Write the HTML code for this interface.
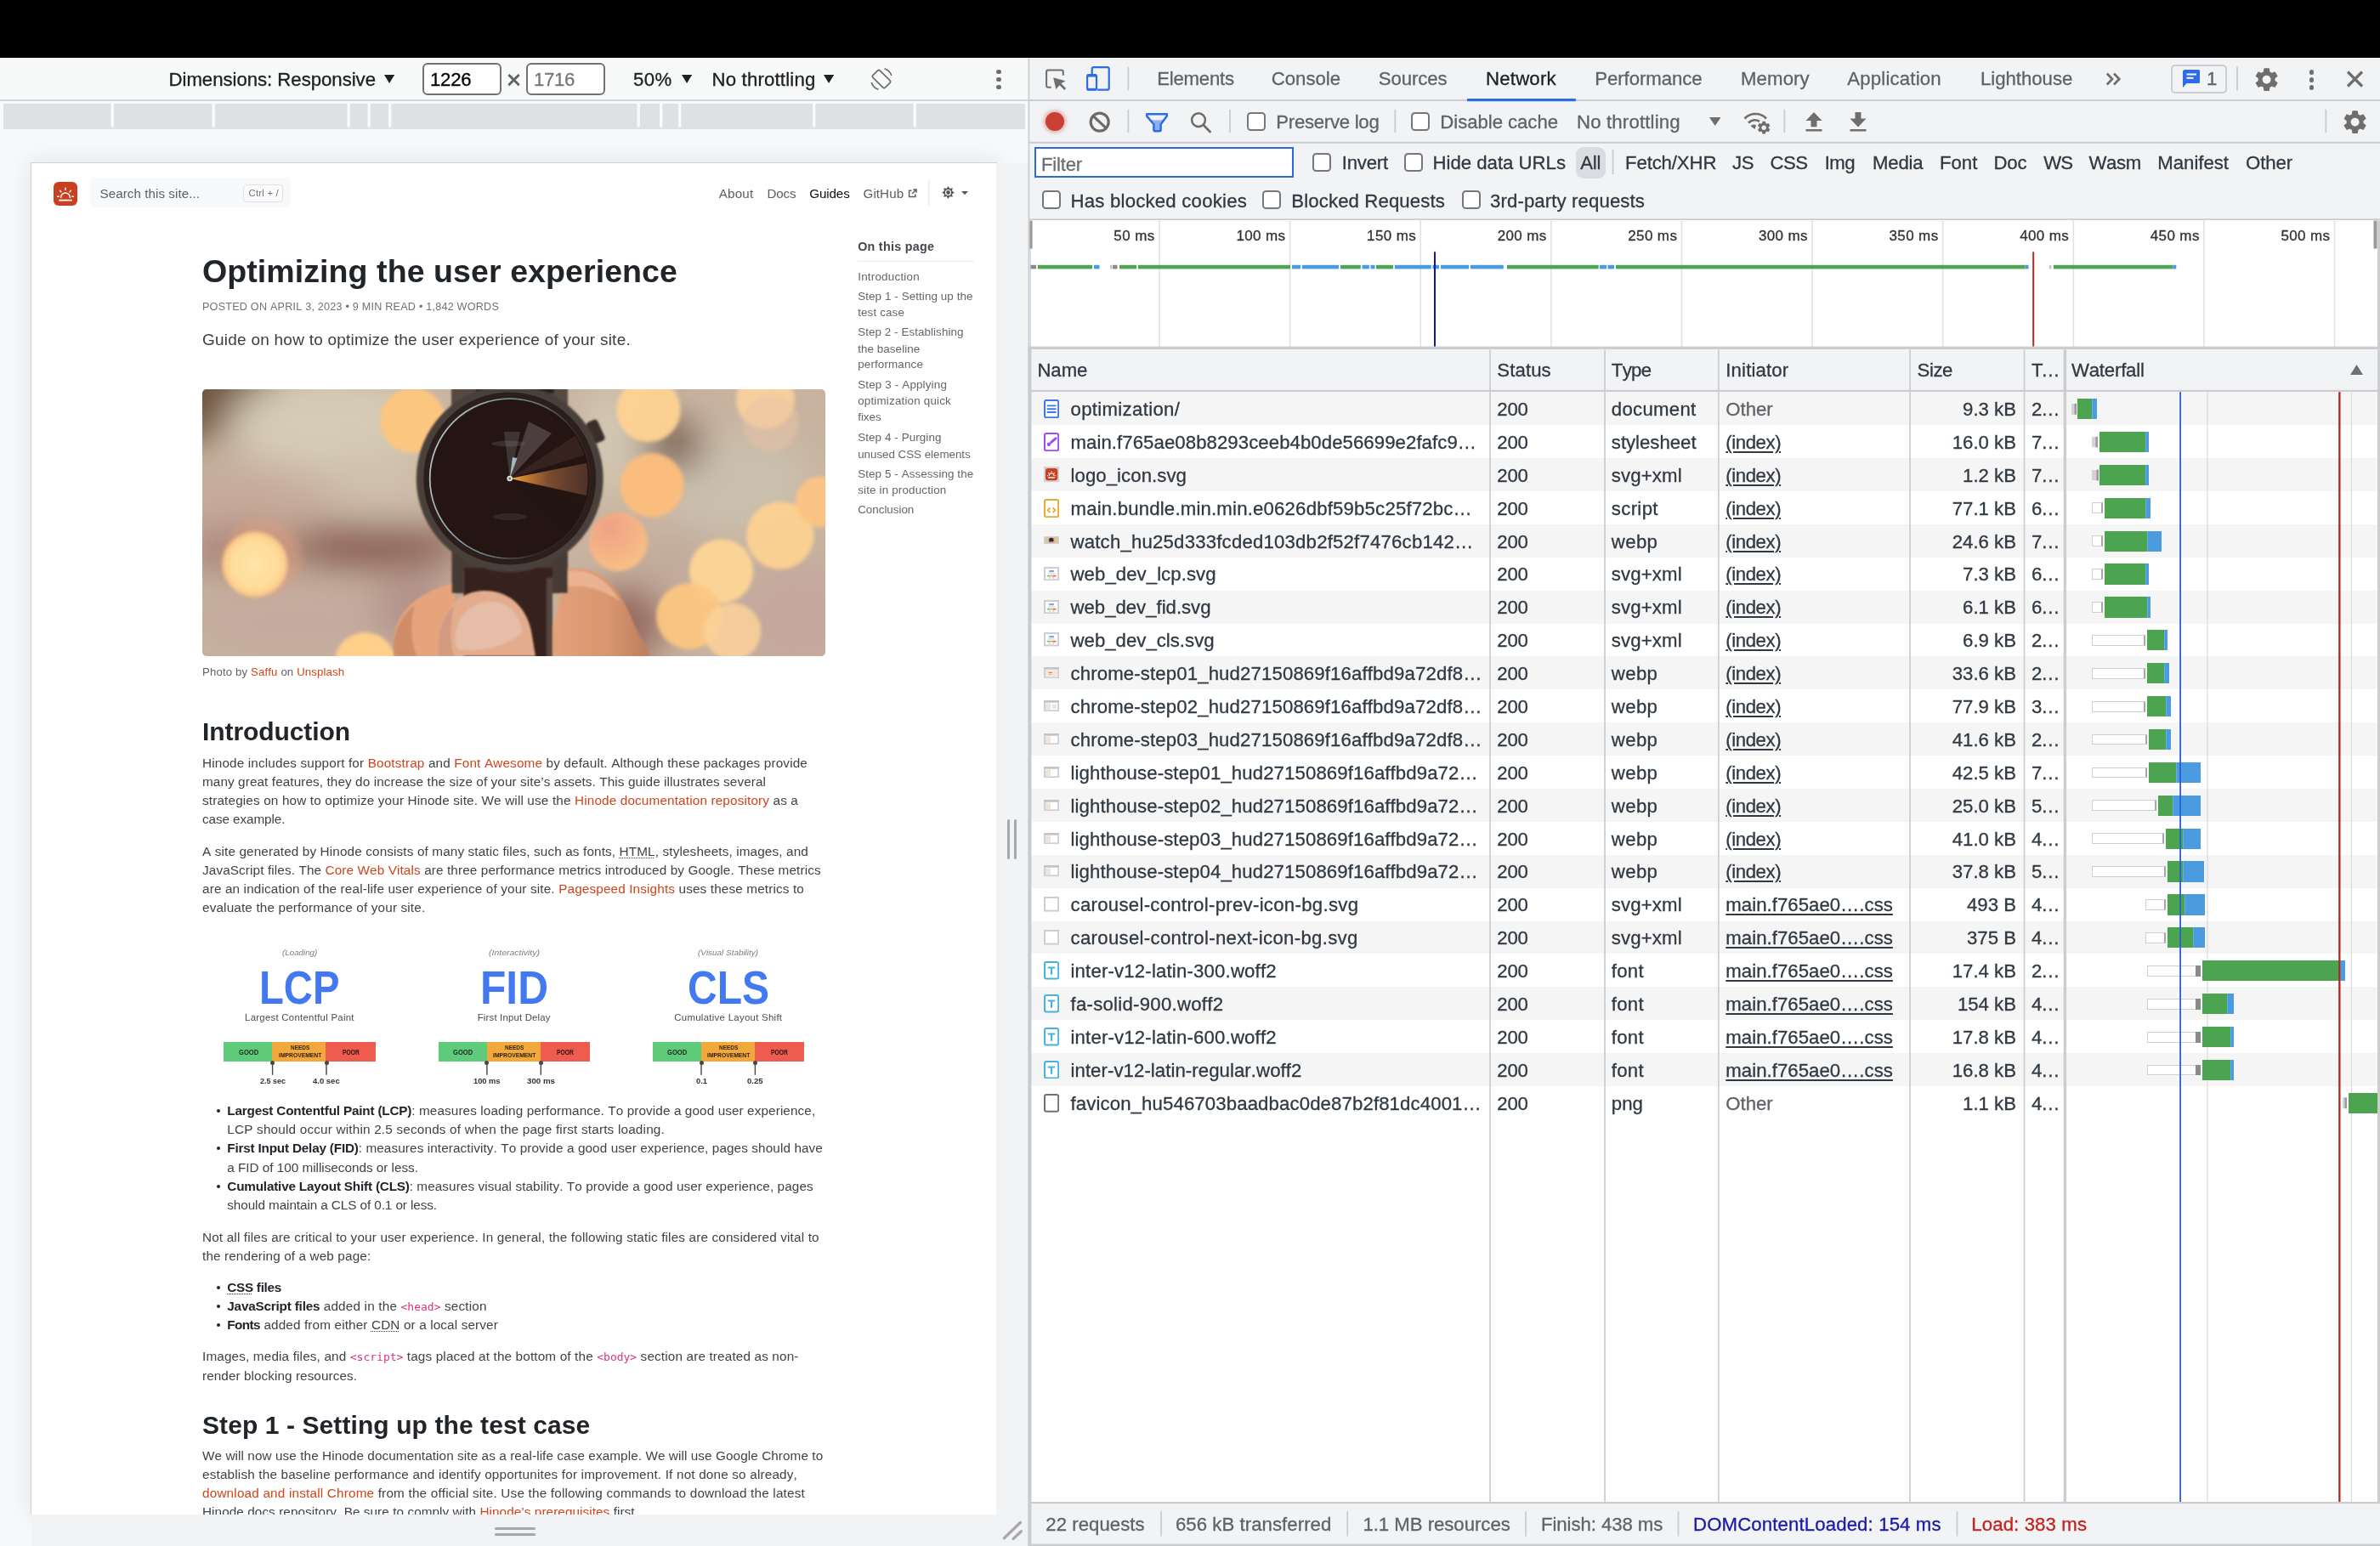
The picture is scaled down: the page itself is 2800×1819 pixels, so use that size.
<!DOCTYPE html>
<html lang="en"><head><meta charset="utf-8"><title>Optimizing the user experience - DevTools</title>
<style>
html,body{margin:0;padding:0}
body{width:2800px;height:1819px;position:relative;overflow:hidden;background:#f8f9fa;font-family:"Liberation Sans",sans-serif;color:#202124}
#root{position:absolute;left:0;top:0;width:2800px;height:1819px;will-change:transform}
.t{position:absolute;white-space:nowrap;line-height:1;font-kerning:none}
.r{position:absolute;box-sizing:border-box}
.c{position:absolute;overflow:hidden}
a,.l{color:#d0451b;text-decoration:none}
b{font-weight:700;color:#212529}
code{font-family:"DejaVu Sans Mono","Liberation Mono",monospace;color:#d63384;font-size:.85em;letter-spacing:0}
abbr{text-decoration:underline dotted;text-decoration-thickness:1px;text-underline-offset:2px}
u{text-decoration:underline;text-decoration-thickness:1.5px;text-underline-offset:3px}
</style></head>
<body>
<div id="root">
<div class="r" style="left:0.00px;top:0.00px;width:2800.00px;height:68.40px;background:#000;"></div>
<div class="r" style="left:0.00px;top:68.50px;width:1210.00px;height:50.00px;background:#f8f9f9;"></div>
<svg class="r" style="left:0px;top:117px" width="1210" height="2"><rect x="0.00" y="0.00" width="1210.00" height="2.00" fill="#d3d6da"/></svg>
<div class="t" style="left:198.50px;top:82.51px;font-size:22.20px;color:#202124;-webkit-text-stroke:.3px;letter-spacing:-0.031px">Dimensions: Responsive</div>
<svg class="r" style="left:451.50px;top:87.80px;" width="12.20" height="10.00" viewBox="0 0 12.2 10"><path d="M0 0H12.2 L6.1 10Z" fill="#202124"/></svg>
<div class="r" style="left:497.30px;top:74.00px;width:92.40px;height:37.70px;background:#fff;border:2.1px solid #727272;border-radius:6px"></div>
<div class="t" style="left:506.00px;top:82.51px;font-size:22.20px;color:#000;-webkit-text-stroke:.3px;letter-spacing:-0.215px">1226</div>
<div class="t" style="left:595.80px;top:79.20px;font-size:30.00px;color:#5f6368;-webkit-text-stroke:.3px;font-weight:400;-webkit-text-stroke:.7px">×</div>
<div class="r" style="left:619.30px;top:74.00px;width:92.40px;height:37.70px;background:#fff;border:2.1px solid #727272;border-radius:6px"></div>
<div class="t" style="left:628.00px;top:82.51px;font-size:22.20px;color:#777;-webkit-text-stroke:.3px;letter-spacing:-0.340px">1716</div>
<div class="t" style="left:745.00px;top:82.51px;font-size:22.20px;color:#202124;-webkit-text-stroke:.3px;letter-spacing:0.359px">50%</div>
<svg class="r" style="left:801.50px;top:87.80px;" width="12.20" height="10.00" viewBox="0 0 12.2 10"><path d="M0 0H12.2 L6.1 10Z" fill="#202124"/></svg>
<div class="t" style="left:837.50px;top:82.51px;font-size:22.20px;color:#202124;-webkit-text-stroke:.3px;letter-spacing:0.181px">No throttling</div>
<svg class="r" style="left:968.50px;top:87.80px;" width="12.20" height="10.00" viewBox="0 0 12.2 10"><path d="M0 0H12.2 L6.1 10Z" fill="#202124"/></svg>
<svg class="r" style="left:1022.00px;top:78.00px;" width="30.00" height="30.00" viewBox="0 0 30 30"><g fill="none" stroke="#6e6e6e" stroke-width="1.700"><rect x="9.200" y="4.800" width="11.600" height="20.400" rx="2" transform="rotate(-45 15 15)"/><path d="M3.200 19A12.800 12.800 0 0 0 11.500 27.300"/><path d="M26.800 11A12.800 12.800 0 0 0 18.500 2.700"/></g></svg>
<div class="r" style="left:1172.20px;top:81.70px;width:5.60px;height:5.60px;background:#6e6e6e;border-radius:50%"></div>
<div class="r" style="left:1172.20px;top:90.70px;width:5.60px;height:5.60px;background:#6e6e6e;border-radius:50%"></div>
<div class="r" style="left:1172.20px;top:99.70px;width:5.60px;height:5.60px;background:#6e6e6e;border-radius:50%"></div>
<div class="r" style="left:0.00px;top:119.00px;width:1210.00px;height:36.00px;background:#f8f9f9;"></div>
<div class="r" style="left:4.00px;top:122.00px;width:1202.00px;height:30.00px;background:#dfe0e4;"></div>
<svg class="r" style="left:130px;top:122px" width="4" height="28"><rect x="0.50" y="0.00" width="3.40" height="27.50" fill="#f8f9f9"/></svg>
<svg class="r" style="left:249px;top:122px" width="4" height="28"><rect x="0.50" y="0.00" width="3.40" height="27.50" fill="#f8f9f9"/></svg>
<svg class="r" style="left:408px;top:122px" width="4" height="28"><rect x="0.50" y="0.00" width="3.40" height="27.50" fill="#f8f9f9"/></svg>
<svg class="r" style="left:432px;top:122px" width="4" height="28"><rect x="0.50" y="0.00" width="3.40" height="27.50" fill="#f8f9f9"/></svg>
<svg class="r" style="left:457px;top:122px" width="4" height="28"><rect x="0.00" y="0.00" width="3.40" height="27.50" fill="#f8f9f9"/></svg>
<svg class="r" style="left:749px;top:122px" width="4" height="28"><rect x="0.50" y="0.00" width="3.40" height="27.50" fill="#f8f9f9"/></svg>
<svg class="r" style="left:776px;top:122px" width="4" height="28"><rect x="0.00" y="0.00" width="3.40" height="27.50" fill="#f8f9f9"/></svg>
<svg class="r" style="left:798px;top:122px" width="4" height="28"><rect x="0.00" y="0.00" width="3.40" height="27.50" fill="#f8f9f9"/></svg>
<svg class="r" style="left:956px;top:122px" width="4" height="28"><rect x="0.00" y="0.00" width="3.40" height="27.50" fill="#f8f9f9"/></svg>
<svg class="r" style="left:1074px;top:122px" width="4" height="28"><rect x="0.50" y="0.00" width="3.40" height="27.50" fill="#f8f9f9"/></svg>
<div class="c" style="left:0;top:155px;width:1210px;height:1664px"><div class="r" style="left:35.90px;top:36.40px;width:1137.00px;height:1591.00px;background:#fff;border-top:1.2px solid #cfd2d4;border-left:1.2px solid #cfd2d4;box-shadow:0 0 28px 4px rgba(10,20,15,.075)"></div>
</div>
<div class="r" style="left:1172.00px;top:192.00px;width:38.00px;height:1627.00px;background:#f1f3f4;"></div>
<div class="r" style="left:36.50px;top:1782.00px;width:1173.50px;height:37.00px;background:#f1f3f4;"></div>
<div class="r" style="left:1185.00px;top:964.00px;width:3.40px;height:47.00px;background:#a6a8ab;border-radius:2px"></div>
<div class="r" style="left:1192.60px;top:964.00px;width:3.40px;height:47.00px;background:#a6a8ab;border-radius:2px"></div>
<div class="r" style="left:581.50px;top:1796.50px;width:48.00px;height:3.40px;background:#a6a8ab;border-radius:2px"></div>
<div class="r" style="left:581.50px;top:1804.00px;width:48.00px;height:3.40px;background:#a6a8ab;border-radius:2px"></div>
<svg class="r" style="left:1179.00px;top:1788.00px;" width="26.00" height="26.00" viewBox="0 0 26 26"><g stroke="#a9a9ab" stroke-width="3.300" stroke-linecap="round"><path d="M2.400 21.800L21.500 3.300"/><path d="M13 22.600L22.400 13.700"/></g></svg>
<div class="r" style="left:63.00px;top:214.00px;width:28.00px;height:28.00px;background:#c8401f;border-radius:6px"></div>
<svg class="r" style="left:63.00px;top:214.00px;" width="28.00" height="28.00" viewBox="0 0 28 28"><g stroke="#fff" stroke-width="1.5" stroke-linecap="round" fill="none"><path d="M8.6 18.4a5.4 5.4 0 0 1 10.8 0"/><path d="M14 7.2v2.2M7.6 10.3l1.3 1.5M20.4 10.3l-1.3 1.5M4.6 17.2h1.6M21.8 17.2h1.6"/><path d="M7 21.6h14" stroke-width="1.9"/></g></svg>
<div class="r" style="left:106.30px;top:209.30px;width:235.50px;height:35.00px;background:#f8f9fa;border-radius:5px"></div>
<div class="t" style="left:117.50px;top:220.13px;font-size:15.20px;color:#5d6166;letter-spacing:0.053px">Search this site...</div>
<div class="r" style="left:286.30px;top:216.80px;width:47.00px;height:21.50px;background:#fbfbfc;border:1px solid #dee2e6;border-radius:4px"></div>
<div class="t" style="left:292.50px;top:221.95px;font-size:11.40px;color:#6c757d;letter-spacing:0.203px">Ctrl + /</div>
<div class="t" style="left:845.70px;top:219.93px;font-size:15.20px;color:#5b5e61;letter-spacing:0.199px">About</div>
<div class="t" style="left:902.50px;top:219.93px;font-size:15.20px;color:#5b5e61;letter-spacing:-0.152px">Docs</div>
<div class="t" style="left:952.30px;top:219.93px;font-size:15.20px;color:#111;letter-spacing:-0.138px">Guides</div>
<div class="t" style="left:1015.50px;top:219.93px;font-size:15.20px;color:#5b5e61;letter-spacing:0.070px">GitHub</div>
<svg class="r" style="left:1067.50px;top:221.50px;" width="11.00" height="11.00" viewBox="0 0 11 11"><g fill="none" stroke="#5b5e61" stroke-width="1.5"><path d="M4.5 2.2H1.6v7.2h7.2V6.5"/><path d="M6.3 1h3.7v3.7M9.8 1.2L5 6"/></g></svg>
<svg class="r" style="left:1092px;top:212px" width="2" height="30"><rect x="0.30" y="0.00" width="1.00" height="30.00" fill="#dcdfe2"/></svg>
<svg class="r" style="left:1107.50px;top:219.30px;" width="15.00" height="15.00" viewBox="0 0 15 15"><g fill="#555"><path d="M7.5 0L9.6 3.4H5.4Z" transform="rotate(0 7.5 7.5)"/><path d="M7.5 0L9.6 3.4H5.4Z" transform="rotate(45 7.5 7.5)"/><path d="M7.5 0L9.6 3.4H5.4Z" transform="rotate(90 7.5 7.5)"/><path d="M7.5 0L9.6 3.4H5.4Z" transform="rotate(135 7.5 7.5)"/><path d="M7.5 0L9.6 3.4H5.4Z" transform="rotate(180 7.5 7.5)"/><path d="M7.5 0L9.6 3.4H5.4Z" transform="rotate(225 7.5 7.5)"/><path d="M7.5 0L9.6 3.4H5.4Z" transform="rotate(270 7.5 7.5)"/><path d="M7.5 0L9.6 3.4H5.4Z" transform="rotate(315 7.5 7.5)"/><circle cx="7.5" cy="7.5" r="5"/></g><circle cx="7.5" cy="7.5" r="3" fill="none" stroke="#fff" stroke-width="1.2"/></svg>
<svg class="r" style="left:1130.80px;top:224.50px;" width="8.00" height="4.20" viewBox="0 0 8 4.2"><path d="M0 0H8 L4 4.2Z" fill="#555"/></svg>
<div class="t" style="left:1009.20px;top:283.10px;font-size:14.30px;color:#42474c;font-weight:700;letter-spacing:0.284px">On this page</div>
<svg class="r" style="left:1008px;top:306px" width="138" height="2"><rect x="0.50" y="0.80" width="137.50" height="1.00" fill="#e6e9ec"/></svg>
<div class="t" style="left:1009.20px;top:318.66px;font-size:13.40px;color:#62676d;letter-spacing:0.226px">Introduction</div>
<div class="t" style="left:1009.20px;top:341.66px;font-size:13.40px;color:#62676d;letter-spacing:0.093px">Step 1 - Setting up the</div>
<div class="t" style="left:1009.20px;top:360.56px;font-size:13.40px;color:#62676d;letter-spacing:0.134px">test case</div>
<div class="t" style="left:1009.20px;top:384.26px;font-size:13.40px;color:#62676d;letter-spacing:0.070px">Step 2 - Establishing</div>
<div class="t" style="left:1009.20px;top:403.56px;font-size:13.40px;color:#62676d;letter-spacing:0.073px">the baseline</div>
<div class="t" style="left:1009.20px;top:422.06px;font-size:13.40px;color:#62676d;letter-spacing:0.147px">performance</div>
<div class="t" style="left:1009.20px;top:446.06px;font-size:13.40px;color:#62676d;letter-spacing:0.166px">Step 3 - Applying</div>
<div class="t" style="left:1009.20px;top:465.36px;font-size:13.40px;color:#62676d;letter-spacing:0.187px">optimization quick</div>
<div class="t" style="left:1009.20px;top:484.36px;font-size:13.40px;color:#62676d;letter-spacing:-0.029px">fixes</div>
<div class="t" style="left:1009.20px;top:508.36px;font-size:13.40px;color:#62676d;letter-spacing:0.095px">Step 4 - Purging</div>
<div class="t" style="left:1009.20px;top:527.56px;font-size:13.40px;color:#62676d;letter-spacing:-0.039px">unused CSS elements</div>
<div class="t" style="left:1009.20px;top:550.66px;font-size:13.40px;color:#62676d;letter-spacing:0.096px">Step 5 - Assessing the</div>
<div class="t" style="left:1009.20px;top:569.86px;font-size:13.40px;color:#62676d;letter-spacing:0.165px">site in production</div>
<div class="t" style="left:1009.20px;top:593.16px;font-size:13.40px;color:#62676d;letter-spacing:-0.015px">Conclusion</div>
<div class="t" style="left:238.00px;top:300.87px;font-size:37.60px;color:#212529;font-weight:700;letter-spacing:0.048px">Optimizing the user experience</div>
<div class="t" style="left:238.00px;top:354.63px;font-size:12.60px;color:#6e7379;letter-spacing:0.225px">POSTED ON APRIL 3, 2023 • 9 MIN READ • 1,842 WORDS</div>
<div class="t" style="left:238.00px;top:389.92px;font-size:19.00px;color:#3a3e42;letter-spacing:0.240px">Guide on how to optimize the user experience of your site.</div>
<svg class="r" style="left:238.00px;top:457.70px;" width="733.00" height="314.00" viewBox="0 0 733 314"><defs><filter id="hb" x="-20%" y="-20%" width="140%" height="140%"><feGaussianBlur stdDeviation="2"/></filter><filter id="hb2" x="-50%" y="-50%" width="200%" height="200%"><feGaussianBlur stdDeviation="22"/></filter><filter id="hb3" x="-10%" y="-10%" width="120%" height="120%"><feGaussianBlur stdDeviation="1.1"/></filter><filter id="hb4" x="-30%" y="-30%" width="160%" height="160%"><feGaussianBlur stdDeviation="5"/></filter><clipPath id="hc"><rect width="733" height="314" rx="5"/></clipPath><clipPath id="fc"><circle cx="361.7" cy="105" r="92"/></clipPath><linearGradient id="og" gradientUnits="userSpaceOnUse" x1="361.7" x2="453.7"><stop offset="0" stop-color="#f6a83c"/><stop offset=".22" stop-color="#c47a2e"/><stop offset=".5" stop-color="#7a4b30"/><stop offset="1" stop-color="#4f3129"/></linearGradient><linearGradient id="sk" x1="0" x2="1"><stop offset="0" stop-color="#e4a37c"/><stop offset=".6" stop-color="#d8966f"/><stop offset="1" stop-color="#bb7d5e"/></linearGradient><radialGradient id="pk" cx=".35" cy=".25" r=".8"><stop offset="0" stop-color="#f1a085"/><stop offset="1" stop-color="#fbc184"/></radialGradient><radialGradient id="b2" cx=".5" cy=".5" r=".5"><stop offset="0" stop-color="#ffe6aa"/><stop offset=".75" stop-color="#ffdb98"/><stop offset="1" stop-color="#fbc585"/></radialGradient><linearGradient id="rg" x1="0" x2="1" y1=".3" y2=".6"><stop offset="0" stop-color="#cfe2e6"/><stop offset=".45" stop-color="#7f9ea8"/><stop offset=".8" stop-color="#3b2c2a"/><stop offset="1" stop-color="#33231f"/></linearGradient></defs><g clip-path="url(#hc)"><rect width="733" height="314" fill="#c7b39f"/><g filter="url(#hb2)"><ellipse cx="-10" cy="-10" rx="95" ry="70" fill="#6f523e"/><ellipse cx="150" cy="40" rx="120" ry="55" fill="#d6ccb6"/><ellipse cx="210" cy="110" rx="60" ry="40" fill="#cfc0ab"/><ellipse cx="50" cy="135" rx="90" ry="35" fill="#c6a999"/><ellipse cx="200" cy="186" rx="110" ry="26" fill="#875a4f"/><ellipse cx="40" cy="190" rx="70" ry="24" fill="#a58073"/><ellipse cx="110" cy="275" rx="130" ry="45" fill="#c5ab9e"/><ellipse cx="250" cy="260" rx="50" ry="40" fill="#b3928a"/><ellipse cx="480" cy="60" rx="35" ry="70" fill="#d2c8b3"/><ellipse cx="620" cy="110" rx="100" ry="60" fill="#cbc0ae"/><ellipse cx="556" cy="66" rx="34" ry="28" fill="#6d4d3d"/><ellipse cx="700" cy="270" rx="80" ry="70" fill="#c4a89c"/><ellipse cx="500" cy="275" rx="45" ry="45" fill="#94685e"/><ellipse cx="560" cy="200" rx="50" ry="40" fill="#c3ab9c"/></g><circle cx="70" cy="198" r="46" fill="#e29f80" opacity=".45" filter="url(#hb4)"/><g filter="url(#hb)"><circle cx="247.5" cy="36.7" r="38.5" fill="#fcc680" opacity="0.98"/><circle cx="62" cy="206" r="38.5" fill="url(#b2)" opacity="1"/><circle cx="191.5" cy="322" r="36" fill="#ffd08a" opacity="0.98"/><circle cx="525" cy="24.4" r="37.7" fill="#fdd292" opacity="0.97"/><circle cx="662.5" cy="12" r="34.6" fill="#fbd29c" opacity="0.9"/><circle cx="668.6" cy="40" r="33.6" fill="#e9c4a8" opacity="0.5"/><circle cx="529" cy="113" r="37.7" fill="#fbbd7c" opacity="0.98"/><circle cx="679.8" cy="172" r="39.7" fill="#fcd092" opacity="0.96"/><circle cx="727.7" cy="132.4" r="30" fill="#fcc483" opacity="0.96"/><circle cx="610.5" cy="214" r="37.7" fill="#fdd596" opacity="0.95"/><circle cx="572.8" cy="267" r="38.7" fill="#fcc682" opacity="0.95"/><circle cx="623.8" cy="285" r="33.6" fill="#fcd29a" opacity="0.85"/><circle cx="489.3" cy="179.3" r="34.6" fill="url(#pk)" opacity=".95"/></g><g filter="url(#hb3)"><path d="M226 314C218 272 246 240 296 228L302 314Z" fill="#e6a47d"/><path d="M226 314C222 290 232 268 250 254C244 276 246 296 252 314Z" fill="#d08c69"/><path d="M428 212C462 206 486 226 502 262C512 286 520 300 527 314H405Z" fill="url(#sk)"/><path d="M430 214C458 210 478 226 492 250C470 234 448 230 430 232Z" fill="#ecb898" opacity=".8"/><rect x="293" y="-4" width="137" height="40" fill="#574a42"/><rect x="322" y="-4" width="92" height="9" fill="#2a201d"/><rect x="293.500" y="188" width="136.500" height="52" rx="2" fill="#46393500"/><path d="M293.500 185H430V240H412V214H307.600V240H293.500Z" fill="#473a35"/><rect x="307.600" y="210" width="104.400" height="110" fill="#35231f"/><rect x="405" y="222" width="7" height="100" fill="#54443f"/><rect x="456" y="36" width="14" height="27" rx="4" fill="#3a2d29" transform="rotate(-24 463 50)"/><circle cx="361.7" cy="105" r="110" fill="#4a3f3a"/></g><circle cx="361.7" cy="105" r="101.500" fill="#2b1e1b"/><circle cx="361.7" cy="105" r="94" fill="none" stroke="url(#rg)" stroke-width="1.700" opacity=".85"/><circle cx="362.2" cy="105.3" r="93" fill="#251512"/><g clip-path="url(#fc)"><path d="M361.7 105L456 86L456 126Z" fill="url(#og)"/><path d="M361.7 105L460 74L452 46Z" fill="#46302b" opacity=".55"/><path d="M361.7 105L384 38L411 52Z" fill="#74676a" opacity=".5"/><path d="M361.7 105L355 50L374 50Z" fill="#8f949c" opacity=".26"/><path d="M361.7 105L365 80L370.500 81Z" fill="#b9d4dc" opacity=".85"/><path d="M268 88L361.7 105L268 146Z" fill="#38252200" opacity=".5"/><path d="M361.7 105L452 140L438 178Z" fill="#211412" opacity=".7"/><ellipse cx="360" cy="64" rx="20" ry="3.500" fill="#8a8a90" opacity=".22"/><ellipse cx="362" cy="150" rx="20" ry="4" fill="#55555c" opacity=".3"/></g><circle cx="361.7" cy="105" r="3.300" fill="#e9e3cc"/><circle cx="361.7" cy="105" r="1.500" fill="#5a7f96"/><g filter="url(#hb3)"><path d="M279 314C272 268 298 237 332 237C364 237 384 260 388 290L392 314Z" fill="#e3ad8d"/><path d="M279 314C275 290 282 268 296 254C290 280 292 300 296 314Z" fill="#d29a80"/><path d="M298 302C294 270 316 250 340 250C360 250 374 266 376 286C362 300 330 310 302 306Z" fill="#e7c4b3" opacity=".7"/></g></g></svg>
<div class="t" style="left:238.00px;top:784.13px;font-size:13.20px;color:#5f646a;letter-spacing:0.146px">Photo by <span class="l">Saffu</span> on <span class="l">Unsplash</span></div>
<div class="t" style="left:238.00px;top:846.31px;font-size:30.00px;color:#212529;font-weight:700;letter-spacing:-0.081px">Introduction</div>
<div class="t" style="left:238.00px;top:889.75px;font-size:15.30px;color:#3f4347;letter-spacing:0.150px">Hinode includes support for <span class="l">Bootstrap</span> and <span class="l">Font Awesome</span> by default. Although these packages provide</div>
<div class="t" style="left:238.00px;top:912.05px;font-size:15.30px;color:#3f4347;letter-spacing:0.092px">many great features, they do increase the size of your site’s assets. This guide illustrates several</div>
<div class="t" style="left:238.00px;top:934.35px;font-size:15.30px;color:#3f4347;letter-spacing:0.148px">strategies on how to optimize your Hinode site. We will use the <span class="l">Hinode documentation repository</span> as a</div>
<div class="t" style="left:238.00px;top:956.35px;font-size:15.30px;color:#3f4347;letter-spacing:-0.103px">case example.</div>
<div class="t" style="left:238.00px;top:993.75px;font-size:15.30px;color:#3f4347;letter-spacing:0.128px">A site generated by Hinode consists of many static files, such as fonts, <abbr>HTML</abbr>, stylesheets, images, and</div>
<div class="t" style="left:238.00px;top:1016.05px;font-size:15.30px;color:#3f4347;letter-spacing:0.115px">JavaScript files. The <span class="l">Core Web Vitals</span> are three performance metrics introduced by Google. These metrics</div>
<div class="t" style="left:238.00px;top:1038.25px;font-size:15.30px;color:#3f4347;letter-spacing:0.143px">are an indication of the real-life user experience of your site. <span class="l">Pagespeed Insights</span> uses these metrics to</div>
<div class="t" style="left:238.00px;top:1060.45px;font-size:15.30px;color:#3f4347;letter-spacing:0.145px">evaluate the performance of your site.</div>
<div class="t" style="left:331.75px;top:1117.56px;font-size:8.20px;color:#7a7d82;font-style:italic;transform:scaleX(1.1939);transform-origin:0 0">(Loading)</div>
<div class="t" style="left:305.15px;top:1135.32px;font-size:55.50px;color:#4279f0;font-weight:700;transform:scaleX(0.8514);transform-origin:0 0">LCP</div>
<div class="t" style="left:288.05px;top:1191.85px;font-size:11.40px;color:#4a4c50;letter-spacing:0.270px">Largest Contentful Paint</div>
<div class="r" style="left:263.20px;top:1226.20px;width:57.30px;height:22.80px;background:#5ecb7a;"></div>
<div class="r" style="left:320.20px;top:1226.20px;width:63.40px;height:22.80px;background:#f2a83b;"></div>
<div class="r" style="left:383.30px;top:1226.20px;width:58.30px;height:22.80px;background:#ee5c50;"></div>
<div class="t" style="left:280.90px;top:1234.07px;font-size:8.30px;color:#1c2b1e;font-weight:700;transform:scaleX(0.9109);transform-origin:0 0">GOOD</div>
<div class="t" style="left:341.70px;top:1229.21px;font-size:7.90px;color:#2b1f0c;font-weight:700;transform:scaleX(0.8202);transform-origin:0 0">NEEDS</div>
<div class="t" style="left:327.50px;top:1238.31px;font-size:7.90px;color:#2b1f0c;font-weight:700;transform:scaleX(0.8579);transform-origin:0 0">IMPROVEMENT</div>
<div class="t" style="left:402.80px;top:1234.07px;font-size:8.30px;color:#2b1010;font-weight:700;transform:scaleX(0.8102);transform-origin:0 0">POOR</div>
<div class="r" style="left:318.10px;top:1248.10px;width:5.00px;height:5.00px;background:#474747;border-radius:50%"></div>
<svg class="r" style="left:319px;top:1250px" width="3" height="15"><rect x="0.90" y="0.00" width="1.40" height="14.80" fill="#474747"/></svg>
<div class="t" style="left:305.60px;top:1268.35px;font-size:8.80px;color:#333;font-weight:700;transform:scaleX(1.0218);transform-origin:0 0">2.5 sec</div>
<div class="r" style="left:381.50px;top:1248.10px;width:5.00px;height:5.00px;background:#474747;border-radius:50%"></div>
<svg class="r" style="left:383px;top:1250px" width="2" height="15"><rect x="0.30" y="0.00" width="1.40" height="14.80" fill="#474747"/></svg>
<div class="t" style="left:368.15px;top:1268.35px;font-size:8.80px;color:#333;font-weight:700;transform:scaleX(1.0797);transform-origin:0 0">4.0 sec</div>
<div class="t" style="left:574.70px;top:1117.56px;font-size:8.20px;color:#7a7d82;font-style:italic;transform:scaleX(1.2804);transform-origin:0 0">(Interactivity)</div>
<div class="t" style="left:564.70px;top:1135.32px;font-size:55.50px;color:#4279f0;font-weight:700;transform:scaleX(0.8948);transform-origin:0 0">FID</div>
<div class="t" style="left:561.70px;top:1191.85px;font-size:11.40px;color:#4a4c50;letter-spacing:0.180px">First Input Delay</div>
<div class="r" style="left:515.50px;top:1226.20px;width:57.30px;height:22.80px;background:#5ecb7a;"></div>
<div class="r" style="left:572.50px;top:1226.20px;width:63.40px;height:22.80px;background:#f2a83b;"></div>
<div class="r" style="left:635.60px;top:1226.20px;width:58.30px;height:22.80px;background:#ee5c50;"></div>
<div class="t" style="left:533.20px;top:1234.07px;font-size:8.30px;color:#1c2b1e;font-weight:700;transform:scaleX(0.9109);transform-origin:0 0">GOOD</div>
<div class="t" style="left:594.00px;top:1229.21px;font-size:7.90px;color:#2b1f0c;font-weight:700;transform:scaleX(0.8202);transform-origin:0 0">NEEDS</div>
<div class="t" style="left:579.80px;top:1238.31px;font-size:7.90px;color:#2b1f0c;font-weight:700;transform:scaleX(0.8579);transform-origin:0 0">IMPROVEMENT</div>
<div class="t" style="left:655.10px;top:1234.07px;font-size:8.30px;color:#2b1010;font-weight:700;transform:scaleX(0.8102);transform-origin:0 0">POOR</div>
<div class="r" style="left:570.40px;top:1248.10px;width:5.00px;height:5.00px;background:#474747;border-radius:50%"></div>
<svg class="r" style="left:572px;top:1250px" width="2" height="15"><rect x="0.20" y="0.00" width="1.40" height="14.80" fill="#474747"/></svg>
<div class="t" style="left:557.15px;top:1268.35px;font-size:8.80px;color:#333;font-weight:700;transform:scaleX(1.0555);transform-origin:0 0">100 ms</div>
<div class="r" style="left:633.80px;top:1248.10px;width:5.00px;height:5.00px;background:#474747;border-radius:50%"></div>
<svg class="r" style="left:635px;top:1250px" width="2" height="15"><rect x="0.60" y="0.00" width="1.40" height="14.80" fill="#474747"/></svg>
<div class="t" style="left:619.80px;top:1268.35px;font-size:8.80px;color:#333;font-weight:700;transform:scaleX(1.1058);transform-origin:0 0">300 ms</div>
<div class="t" style="left:821.30px;top:1117.56px;font-size:8.20px;color:#7a7d82;font-style:italic;transform:scaleX(1.2095);transform-origin:0 0">(Visual Stability)</div>
<div class="t" style="left:808.80px;top:1135.32px;font-size:55.50px;color:#4279f0;font-weight:700;transform:scaleX(0.8649);transform-origin:0 0">CLS</div>
<div class="t" style="left:793.30px;top:1191.85px;font-size:11.40px;color:#4a4c50;letter-spacing:0.291px">Cumulative Layout Shift</div>
<div class="r" style="left:767.60px;top:1226.20px;width:57.30px;height:22.80px;background:#5ecb7a;"></div>
<div class="r" style="left:824.60px;top:1226.20px;width:63.40px;height:22.80px;background:#f2a83b;"></div>
<div class="r" style="left:887.70px;top:1226.20px;width:58.30px;height:22.80px;background:#ee5c50;"></div>
<div class="t" style="left:785.30px;top:1234.07px;font-size:8.30px;color:#1c2b1e;font-weight:700;transform:scaleX(0.9109);transform-origin:0 0">GOOD</div>
<div class="t" style="left:846.10px;top:1229.21px;font-size:7.90px;color:#2b1f0c;font-weight:700;transform:scaleX(0.8202);transform-origin:0 0">NEEDS</div>
<div class="t" style="left:831.90px;top:1238.31px;font-size:7.90px;color:#2b1f0c;font-weight:700;transform:scaleX(0.8579);transform-origin:0 0">IMPROVEMENT</div>
<div class="t" style="left:907.20px;top:1234.07px;font-size:8.30px;color:#2b1010;font-weight:700;transform:scaleX(0.8102);transform-origin:0 0">POOR</div>
<div class="r" style="left:822.50px;top:1248.10px;width:5.00px;height:5.00px;background:#474747;border-radius:50%"></div>
<svg class="r" style="left:824px;top:1250px" width="2" height="15"><rect x="0.30" y="0.00" width="1.40" height="14.80" fill="#474747"/></svg>
<div class="t" style="left:818.50px;top:1268.35px;font-size:8.80px;color:#333;font-weight:700;transform:scaleX(1.0626);transform-origin:0 0">0.1</div>
<div class="r" style="left:885.90px;top:1248.10px;width:5.00px;height:5.00px;background:#474747;border-radius:50%"></div>
<svg class="r" style="left:887px;top:1250px" width="3" height="15"><rect x="0.70" y="0.00" width="1.40" height="14.80" fill="#474747"/></svg>
<div class="t" style="left:879.15px;top:1268.35px;font-size:8.80px;color:#333;font-weight:700;transform:scaleX(1.0803);transform-origin:0 0">0.25</div>
<div class="r" style="left:255.20px;top:1304.50px;width:4.20px;height:4.20px;background:#212529;border-radius:50%"></div>
<div class="r" style="left:255.20px;top:1349.00px;width:4.20px;height:4.20px;background:#212529;border-radius:50%"></div>
<div class="r" style="left:255.20px;top:1393.50px;width:4.20px;height:4.20px;background:#212529;border-radius:50%"></div>
<div class="r" style="left:255.20px;top:1512.80px;width:4.20px;height:4.20px;background:#212529;border-radius:50%"></div>
<div class="r" style="left:255.20px;top:1534.80px;width:4.20px;height:4.20px;background:#212529;border-radius:50%"></div>
<div class="r" style="left:255.20px;top:1556.80px;width:4.20px;height:4.20px;background:#212529;border-radius:50%"></div>
<div class="t" style="left:267.30px;top:1298.75px;font-size:15.30px;color:#3f4347;letter-spacing:-0.189px"><b>Largest Contentful Paint (LCP)</b></div>
<div class="t" style="left:484.30px;top:1298.75px;font-size:15.30px;color:#3f4347;letter-spacing:0.098px">: measures loading performance. To provide a good user experience,</div>
<div class="t" style="left:267.30px;top:1321.05px;font-size:15.30px;color:#3f4347;letter-spacing:0.187px">LCP should occur within 2.5 seconds of when the page first starts loading.</div>
<div class="t" style="left:267.30px;top:1343.25px;font-size:15.30px;color:#3f4347;letter-spacing:-0.197px"><b>First Input Delay (FID)</b></div>
<div class="t" style="left:421.70px;top:1343.25px;font-size:15.30px;color:#3f4347;letter-spacing:0.103px">: measures interactivity. To provide a good user experience, pages should have</div>
<div class="t" style="left:267.30px;top:1365.55px;font-size:15.30px;color:#3f4347;letter-spacing:-0.018px">a FID of 100 milliseconds or less.</div>
<div class="t" style="left:267.30px;top:1387.75px;font-size:15.30px;color:#3f4347;letter-spacing:-0.197px"><b>Cumulative Layout Shift (CLS)</b></div>
<div class="t" style="left:481.70px;top:1387.75px;font-size:15.30px;color:#3f4347;letter-spacing:0.082px">: measures visual stability. To provide a good user experience, pages</div>
<div class="t" style="left:267.30px;top:1410.05px;font-size:15.30px;color:#3f4347;letter-spacing:-0.089px">should maintain a CLS of 0.1 or less.</div>
<div class="t" style="left:238.00px;top:1447.75px;font-size:15.30px;color:#3f4347;letter-spacing:0.153px">Not all files are critical to your user experience. In general, the following static files are considered vital to</div>
<div class="t" style="left:238.00px;top:1470.05px;font-size:15.30px;color:#3f4347;letter-spacing:0.126px">the rendering of a web page:</div>
<div class="t" style="left:267.30px;top:1507.05px;font-size:15.30px;color:#3f4347;letter-spacing:-0.290px"><b><abbr>CSS</abbr> files</b></div>
<div class="t" style="left:267.30px;top:1529.05px;font-size:15.30px;color:#3f4347;letter-spacing:-0.203px"><b>JavaScript files</b></div>
<div class="t" style="left:376.30px;top:1529.05px;font-size:15.30px;color:#3f4347;letter-spacing:0.178px">&nbsp;added in the <code>&lt;head&gt;</code> section</div>
<div class="t" style="left:267.30px;top:1551.05px;font-size:15.30px;color:#3f4347;letter-spacing:-0.588px"><b>Fonts</b></div>
<div class="t" style="left:306.00px;top:1551.05px;font-size:15.30px;color:#3f4347;letter-spacing:0.134px">&nbsp;added from either <abbr>CDN</abbr> or a local server</div>
<div class="t" style="left:238.00px;top:1588.35px;font-size:15.30px;color:#3f4347;letter-spacing:0.148px">Images, media files, and <code>&lt;script&gt;</code> tags placed at the bottom of the <code>&lt;body&gt;</code> section are treated as non-</div>
<div class="t" style="left:238.00px;top:1610.75px;font-size:15.30px;color:#3f4347;letter-spacing:0.067px">render blocking resources.</div>
<div class="t" style="left:238.00px;top:1661.90px;font-size:30.00px;color:#212529;font-weight:700;letter-spacing:0.087px">Step 1 - Setting up the test case</div>
<div class="t" style="left:238.00px;top:1704.75px;font-size:15.30px;color:#3f4347;letter-spacing:0.082px">We will now use the Hinode documentation site as a real-life case example. We will use Google Chrome to</div>
<div class="t" style="left:238.00px;top:1727.05px;font-size:15.30px;color:#3f4347;letter-spacing:0.170px">establish the baseline performance and identify opportunites for improvement. If not done so already,</div>
<div class="t" style="left:238.00px;top:1749.35px;font-size:15.30px;color:#3f4347;letter-spacing:0.184px"><span class="l">download and install Chrome</span> from the official site. Use the following commands to download the latest</div>
<div class="c" style="left:230px;top:1768px;width:760px;height:14px"><div class="t" style="left:8.00px;top:3.05px;font-size:15.30px;color:#3f4347;letter-spacing:0.071px">Hinode docs repository. Be sure to comply with <span class="l">Hinode’s prerequisites</span> first.</div>
</div>
<div class="r" style="left:1210.00px;top:68.50px;width:1590.00px;height:190.00px;background:#f1f3f4;"></div>
<svg class="r" style="left:1209px;top:68px" width="3" height="1752"><rect x="0.50" y="0.50" width="1.80" height="1751.00" fill="#cbcdd1"/></svg>
<svg class="r" style="left:1211px;top:117px" width="1589" height="2"><rect x="0.00" y="0.00" width="1589.00" height="2.00" fill="#cbcdd1"/></svg>
<svg class="r" style="left:1226.00px;top:78.00px;" width="32.00" height="32.00" viewBox="1226 78 32 32"><path d="M1250.8 88.7V84.600a2 2 0 0 0-2-2H1233.100a2 2 0 0 0-2 2V100.800a2 2 0 0 0 2 2H1236.700" fill="none" stroke="#6e6e6e" stroke-width="2"/><path d="M1239.200 91.200L1253.500 95.200L1248.400 98.300L1254.200 104.100L1252.300 106L1246.500 100.200L1242.300 105.100Z" fill="#6e6e6e"/></svg>
<svg class="r" style="left:1276.00px;top:76.00px;" width="32.00" height="32.00" viewBox="1276 76 32 32"><g fill="none" stroke="#2e6be6" stroke-width="2.200"><path d="M1284.700 87V81.200a2 2 0 0 1 2-2h16a2 2 0 0 1 2 2v22.500a2 2 0 0 1-2 2H1291.100"/><rect x="1279.100" y="88.200" width="10.900" height="17.500" rx="1.800"/></g><rect x="1279.100" y="87.500" width="10.900" height="3" fill="#2e6be6"/><rect x="1279.100" y="103.800" width="10.900" height="2.500" fill="#2e6be6"/></svg>
<svg class="r" style="left:1326px;top:78px" width="3" height="29"><rect x="0.35" y="0.70" width="1.90" height="27.60" fill="#cbcdd1"/></svg>
<div class="t" style="left:1361.30px;top:82.21px;font-size:22.20px;color:#5f6368;-webkit-text-stroke:.3px;letter-spacing:-0.250px">Elements</div>
<div class="t" style="left:1495.80px;top:82.21px;font-size:22.20px;color:#5f6368;-webkit-text-stroke:.3px;letter-spacing:-0.029px">Console</div>
<div class="t" style="left:1621.80px;top:82.21px;font-size:22.20px;color:#5f6368;-webkit-text-stroke:.3px;letter-spacing:-0.101px">Sources</div>
<div class="t" style="left:1748.00px;top:82.21px;font-size:22.20px;color:#202124;-webkit-text-stroke:.3px;letter-spacing:0.204px">Network</div>
<svg class="r" style="left:1726px;top:116px" width="128" height="4"><rect x="0.00" y="0.00" width="127.80" height="3.20" fill="#2e6de0"/></svg>
<div class="t" style="left:1876.30px;top:82.21px;font-size:22.20px;color:#5f6368;-webkit-text-stroke:.3px;letter-spacing:-0.074px">Performance</div>
<div class="t" style="left:2048.00px;top:82.21px;font-size:22.20px;color:#5f6368;-webkit-text-stroke:.3px;letter-spacing:0.110px">Memory</div>
<div class="t" style="left:2173.30px;top:82.21px;font-size:22.20px;color:#5f6368;-webkit-text-stroke:.3px;letter-spacing:0.178px">Application</div>
<div class="t" style="left:2330.00px;top:82.21px;font-size:22.20px;color:#5f6368;-webkit-text-stroke:.3px;letter-spacing:-0.028px">Lighthouse</div>
<svg class="r" style="left:2477.00px;top:85.00px;" width="19.00" height="16.00" viewBox="0 0 19 16"><g fill="none" stroke="#6e6e6e" stroke-width="2.700"><path d="M1.800 1.500L8 8L1.800 14.500"/><path d="M10 1.500L16.200 8L10 14.500"/></g></svg>
<div class="r" style="left:2554.30px;top:76.00px;width:65.50px;height:33.70px;background:#f1f3f4;border:2.1px solid #cbcdd1;border-radius:5px"></div>
<svg class="r" style="left:2567.50px;top:82.00px;" width="20.50" height="21.00" viewBox="0 0 20.5 21"><path d="M2.5 0h15.5a2.5 2.5 0 0 1 2.5 2.5v11a2.5 2.5 0 0 1-2.5 2.5H4.5L0 21V2.500A2.500 2.500 0 0 1 2.500 0Z" fill="#2e6be6"/><path d="M4.500 5.500h11.5M4.500 9.800h8" stroke="#fff" stroke-width="2"/></svg>
<div class="t" style="left:2596.00px;top:82.21px;font-size:22.20px;color:#5f6368;-webkit-text-stroke:.3px">1</div>
<svg class="r" style="left:2631px;top:78px" width="2" height="29"><rect x="0.05" y="0.70" width="1.90" height="27.60" fill="#cbcdd1"/></svg>
<svg class="r" style="left:2650.34px;top:76.54px;" width="33.22" height="33.22" viewBox="0 0 24 24"><path d="M19.14 12.94c.04-.3.06-.61.06-.94 0-.32-.02-.64-.07-.94l2.03-1.58a.49.49 0 0 0 .12-.61l-1.92-3.32a.488.488 0 0 0-.59-.22l-2.39.96c-.5-.38-1.03-.7-1.62-.94l-.36-2.54a.484.484 0 0 0-.48-.41h-3.84c-.24 0-.43.17-.47.41l-.36 2.54c-.59.24-1.13.57-1.62.94l-2.39-.96c-.22-.08-.47 0-.59.22L2.74 8.87c-.12.21-.08.47.12.61l2.03 1.58c-.05.3-.09.63-.09.94s.02.64.07.94l-2.03 1.58a.49.49 0 0 0-.12.61l1.92 3.32c.12.22.37.29.59.22l2.39-.96c.5.38 1.03.7 1.62.94l.36 2.54c.05.24.24.41.48.41h3.84c.24 0 .44-.17.47-.41l.36-2.54c.59-.24 1.13-.56 1.62-.94l2.39.96c.22.08.47 0 .59-.22l1.92-3.32c.12-.22.07-.47-.12-.61l-2.01-1.58zM12 15.6c-1.98 0-3.6-1.62-3.6-3.6s1.62-3.6 3.6-3.6 3.6 1.62 3.6 3.6-1.62 3.6-3.6 3.6z" fill="#6e6e6e"/></svg>
<div class="r" style="left:2716.50px;top:82.20px;width:5.60px;height:5.60px;background:#6e6e6e;border-radius:50%"></div>
<div class="r" style="left:2716.50px;top:91.20px;width:5.60px;height:5.60px;background:#6e6e6e;border-radius:50%"></div>
<div class="r" style="left:2716.50px;top:100.20px;width:5.60px;height:5.60px;background:#6e6e6e;border-radius:50%"></div>
<svg class="r" style="left:2760.00px;top:83.00px;" width="21.00" height="20.00" viewBox="0 0 21 20"><path d="M2 1.500L19 18.500M19 1.500L2 18.500" stroke="#6e6e6e" stroke-width="3.200"/></svg>
<svg class="r" style="left:1211px;top:166px" width="1589" height="3"><rect x="0.00" y="0.80" width="1589.00" height="2.00" fill="#cbcdd1"/></svg>
<div class="r" style="left:1229.90px;top:131.50px;width:22.20px;height:22.20px;background:#c94032;border-radius:50%;box-shadow:0 0 4px 2px rgba(201,64,50,.4)"></div>
<svg class="r" style="left:1280.00px;top:130.00px;" width="28.00" height="28.00" viewBox="1280 130 28 28"><g fill="none" stroke="#6b6b6b" stroke-width="3.200"><circle cx="1293.700" cy="143.600" r="10.500"/><path d="M1286.300 136.600L1301.100 150.600"/></g></svg>
<svg class="r" style="left:1326px;top:128px" width="3" height="29"><rect x="0.35" y="0.80" width="1.90" height="27.50" fill="#cbcdd1"/></svg>
<svg class="r" style="left:1346.00px;top:131.00px;" width="30.00" height="27.00" viewBox="1346 131 30 27"><path d="M1357.400 141.800H1365.600V152.800a1.200 1.200 0 0 1-1.200 1.200H1358.600a1.200 1.200 0 0 1-1.200-1.200Z" fill="#8fb0ec"/><path d="M1353.500 141.200H1369.500L1365.600 146V141.800H1357.400V146Z" fill="#8fb0ec"/><path d="M1349.200 134.300H1372.800V136.600L1365.600 146.200V153a1.200 1.200 0 0 1-1.200 1.200H1358.600a1.200 1.200 0 0 1-1.200-1.200V146.200L1349.200 136.600Z" fill="none" stroke="#2e6be6" stroke-width="2.500" stroke-linejoin="round"/></svg>
<svg class="r" style="left:1398.00px;top:130.00px;" width="30.00" height="30.00" viewBox="1398 130 30 30"><g fill="none" stroke="#6b6b6b"><circle cx="1410" cy="141.100" r="7.900" stroke-width="2.500"/><path d="M1415.500 146.800L1424.400 155.900" stroke-width="2.700"/></g></svg>
<svg class="r" style="left:1446px;top:128px" width="2" height="29"><rect x="0.05" y="0.80" width="1.90" height="27.50" fill="#cbcdd1"/></svg>
<div class="r" style="left:1467.00px;top:132.00px;width:22.00px;height:22.00px;background:#fff;border:2px solid #74777c;border-radius:4.5px"></div>
<div class="t" style="left:1501.30px;top:132.71px;font-size:22.20px;color:#5f6368;-webkit-text-stroke:.3px;letter-spacing:-0.280px">Preserve log</div>
<svg class="r" style="left:1640px;top:128px" width="3" height="29"><rect x="0.35" y="0.80" width="1.90" height="27.50" fill="#cbcdd1"/></svg>
<div class="r" style="left:1660.00px;top:132.00px;width:22.00px;height:22.00px;background:#fff;border:2px solid #74777c;border-radius:4.5px"></div>
<div class="t" style="left:1694.30px;top:132.71px;font-size:22.20px;color:#5f6368;-webkit-text-stroke:.3px;letter-spacing:-0.052px">Disable cache</div>
<div class="t" style="left:1855.00px;top:132.71px;font-size:22.20px;color:#5f6368;-webkit-text-stroke:.3px;letter-spacing:0.166px">No throttling</div>
<svg class="r" style="left:2010.80px;top:137.50px;" width="13.50" height="10.00" viewBox="0 0 13.5 10"><path d="M0 0H13.500L6.750 10Z" fill="#6e6e6e"/></svg>
<svg class="r" style="left:2051.00px;top:130.00px;" width="32.00" height="27.00" viewBox="0 0 32 27"><g fill="none" stroke="#6e6e6e" stroke-width="2.7"><path d="M1.500 9.500a17.500 17.500 0 0 1 25.500 0"/><path d="M6 14.500a11 11 0 0 1 13-1.800"/></g><path d="M8.500 18.200a5.500 5.500 0 0 1 6.600-0.800L13.500 22Z" fill="#6e6e6e"/></svg>
<svg class="r" style="left:2065.59px;top:141.39px;" width="18.32" height="18.32" viewBox="0 0 24 24"><path d="M19.14 12.94c.04-.3.06-.61.06-.94 0-.32-.02-.64-.07-.94l2.03-1.58a.49.49 0 0 0 .12-.61l-1.92-3.32a.488.488 0 0 0-.59-.22l-2.39.96c-.5-.38-1.03-.7-1.62-.94l-.36-2.54a.484.484 0 0 0-.48-.41h-3.84c-.24 0-.43.17-.47.41l-.36 2.54c-.59.24-1.13.57-1.62.94l-2.39-.96c-.22-.08-.47 0-.59.22L2.74 8.87c-.12.21-.08.47.12.61l2.03 1.58c-.05.3-.09.63-.09.94s.02.64.07.94l-2.03 1.58a.49.49 0 0 0-.12.61l1.92 3.32c.12.22.37.29.59.22l2.39-.96c.5.38 1.03.7 1.62.94l.36 2.54c.05.24.24.41.48.41h3.84c.24 0 .44-.17.47-.41l.36-2.54c.59-.24 1.13-.56 1.62-.94l2.39.96c.22.08.47 0 .59-.22l1.92-3.32c.12-.22.07-.47-.12-.61l-2.01-1.58zM12 15.6c-1.98 0-3.6-1.62-3.6-3.6s1.62-3.6 3.6-3.6 3.6 1.62 3.6 3.6-1.62 3.6-3.6 3.6z" fill="#6e6e6e"/></svg>
<svg class="r" style="left:2098px;top:128px" width="3" height="29"><rect x="0.35" y="0.80" width="1.90" height="27.50" fill="#cbcdd1"/></svg>
<svg class="r" style="left:2123.50px;top:132.00px;" width="20.00" height="23.00" viewBox="0 0 20 23"><path d="M10 0L19.500 10H13.500V17.200H6.500V10H0.500Z M0.500 20H19.500V22.500H0.500Z" fill="#6e6e6e"/></svg>
<svg class="r" style="left:2175.50px;top:132.00px;" width="20.00" height="23.00" viewBox="0 0 20 23"><path d="M6.500 0H13.500V7.500H19.500L10 17.500L0.500 7.500H6.500Z M0.500 20H19.500V22.500H0.500Z" fill="#6e6e6e"/></svg>
<svg class="r" style="left:2735px;top:128px" width="3" height="29"><rect x="0.35" y="0.80" width="1.90" height="27.50" fill="#cbcdd1"/></svg>
<svg class="r" style="left:2753.54px;top:126.54px;" width="33.22" height="33.22" viewBox="0 0 24 24"><path d="M19.14 12.94c.04-.3.06-.61.06-.94 0-.32-.02-.64-.07-.94l2.03-1.58a.49.49 0 0 0 .12-.61l-1.92-3.32a.488.488 0 0 0-.59-.22l-2.39.96c-.5-.38-1.03-.7-1.62-.94l-.36-2.54a.484.484 0 0 0-.48-.41h-3.84c-.24 0-.43.17-.47.41l-.36 2.54c-.59.24-1.13.57-1.62.94l-2.39-.96c-.22-.08-.47 0-.59.22L2.74 8.87c-.12.21-.08.47.12.61l2.03 1.58c-.05.3-.09.63-.09.94s.02.64.07.94l-2.03 1.58a.49.49 0 0 0-.12.61l1.92 3.32c.12.22.37.29.59.22l2.39-.96c.5.38 1.03.7 1.62.94l.36 2.54c.05.24.24.41.48.41h3.84c.24 0 .44-.17.47-.41l.36-2.54c.59-.24 1.13-.56 1.62-.94l2.39.96c.22.08.47 0 .59-.22l1.92-3.32c.12-.22.07-.47-.12-.61l-2.01-1.58zM12 15.6c-1.98 0-3.6-1.62-3.6-3.6s1.62-3.6 3.6-3.6 3.6 1.62 3.6 3.6-1.62 3.6-3.6 3.6z" fill="#6e6e6e"/></svg>
<div class="r" style="left:1217.00px;top:172.50px;width:305.00px;height:36.30px;background:#fff;border:2.4px solid #2b68e4"></div>
<div class="t" style="left:1225.00px;top:182.71px;font-size:22.20px;color:#6b6f75;-webkit-text-stroke:.3px;letter-spacing:-0.219px">Filter</div>
<div class="r" style="left:1544.00px;top:180.00px;width:22.00px;height:22.00px;background:#fff;border:2px solid #74777c;border-radius:4.5px"></div>
<div class="t" style="left:1578.80px;top:180.81px;font-size:22.20px;color:#303942;-webkit-text-stroke:.3px;letter-spacing:-0.217px">Invert</div>
<div class="r" style="left:1652.00px;top:180.00px;width:22.00px;height:22.00px;background:#fff;border:2px solid #74777c;border-radius:4.5px"></div>
<div class="t" style="left:1685.50px;top:180.81px;font-size:22.20px;color:#303942;-webkit-text-stroke:.3px;letter-spacing:-0.009px">Hide data URLs</div>
<div class="r" style="left:1854.30px;top:172.50px;width:34.50px;height:37.00px;background:#dadce0;border-radius:9px"></div>
<div class="t" style="left:1859.30px;top:180.61px;font-size:22.20px;color:#303942;-webkit-text-stroke:.3px;letter-spacing:-0.324px">All</div>
<svg class="r" style="left:1896px;top:176px" width="3" height="29"><rect x="0.55" y="0.00" width="1.90" height="29.00" fill="#cbcdd1"/></svg>
<div class="t" style="left:1912.00px;top:180.61px;font-size:22.20px;color:#303942;-webkit-text-stroke:.3px;letter-spacing:-0.133px">Fetch/XHR</div>
<div class="t" style="left:2038.00px;top:180.61px;font-size:22.20px;color:#303942;-webkit-text-stroke:.3px;letter-spacing:-0.453px">JS</div>
<div class="t" style="left:2082.50px;top:180.61px;font-size:22.20px;color:#303942;-webkit-text-stroke:.3px;letter-spacing:-0.542px">CSS</div>
<div class="t" style="left:2146.80px;top:180.61px;font-size:22.20px;color:#303942;-webkit-text-stroke:.3px;letter-spacing:-0.600px">Img</div>
<div class="t" style="left:2203.00px;top:180.61px;font-size:22.20px;color:#303942;-webkit-text-stroke:.3px;letter-spacing:-0.188px">Media</div>
<div class="t" style="left:2282.00px;top:180.61px;font-size:22.20px;color:#303942;-webkit-text-stroke:.3px;letter-spacing:-0.027px">Font</div>
<div class="t" style="left:2345.50px;top:180.61px;font-size:22.20px;color:#303942;-webkit-text-stroke:.3px;letter-spacing:-0.156px">Doc</div>
<div class="t" style="left:2404.30px;top:180.61px;font-size:22.20px;color:#303942;-webkit-text-stroke:.3px;letter-spacing:-0.875px">WS</div>
<div class="t" style="left:2457.50px;top:180.61px;font-size:22.20px;color:#303942;-webkit-text-stroke:.3px;letter-spacing:-0.390px">Wasm</div>
<div class="t" style="left:2538.30px;top:180.61px;font-size:22.20px;color:#303942;-webkit-text-stroke:.3px;letter-spacing:-0.020px">Manifest</div>
<div class="t" style="left:2642.00px;top:180.61px;font-size:22.20px;color:#303942;-webkit-text-stroke:.3px;letter-spacing:-0.100px">Other</div>
<div class="r" style="left:1226.30px;top:224.20px;width:22.00px;height:22.00px;background:#fff;border:2px solid #74777c;border-radius:4.5px"></div>
<div class="t" style="left:1259.50px;top:226.01px;font-size:22.20px;color:#303942;-webkit-text-stroke:.3px;letter-spacing:0.211px">Has blocked cookies</div>
<div class="r" style="left:1485.00px;top:224.20px;width:22.00px;height:22.00px;background:#fff;border:2px solid #74777c;border-radius:4.5px"></div>
<div class="t" style="left:1519.30px;top:226.01px;font-size:22.20px;color:#303942;-webkit-text-stroke:.3px;letter-spacing:0.116px">Blocked Requests</div>
<div class="r" style="left:1719.50px;top:224.20px;width:22.00px;height:22.00px;background:#fff;border:2px solid #74777c;border-radius:4.5px"></div>
<div class="t" style="left:1753.00px;top:226.01px;font-size:22.20px;color:#303942;-webkit-text-stroke:.3px;letter-spacing:0.109px">3rd-party requests</div>
<svg class="r" style="left:1211px;top:257px" width="1589" height="3"><rect x="0.00" y="0.30" width="1589.00" height="2.00" fill="#cbcdd1"/></svg>
<div class="r" style="left:1211.30px;top:259.30px;width:1588.70px;height:148.50px;background:#fff;"></div>
<svg class="r" style="left:1211px;top:292px" width="2" height="116"><rect x="0.30" y="0.00" width="1.50" height="116.00" fill="#c3d3ee"/></svg>
<svg class="r" style="left:1363px;top:259px" width="2" height="149"><rect x="0.20" y="0.30" width="1.60" height="148.50" fill="#e2e2e2"/></svg>
<div class="t" style="right:1441.20px;top:268.91px;font-size:17.00px;color:#303134;-webkit-text-stroke:.3px;letter-spacing:0.441px">50 ms</div>
<svg class="r" style="left:1516px;top:259px" width="3" height="149"><rect x="0.82" y="0.30" width="1.60" height="148.50" fill="#e2e2e2"/></svg>
<div class="t" style="right:1287.58px;top:268.91px;font-size:17.00px;color:#303134;-webkit-text-stroke:.3px;letter-spacing:0.375px">100 ms</div>
<svg class="r" style="left:1670px;top:259px" width="3" height="149"><rect x="0.44" y="0.30" width="1.60" height="148.50" fill="#e2e2e2"/></svg>
<div class="t" style="right:1133.96px;top:268.91px;font-size:17.00px;color:#303134;-webkit-text-stroke:.3px;letter-spacing:0.375px">150 ms</div>
<svg class="r" style="left:1824px;top:259px" width="2" height="149"><rect x="0.06" y="0.30" width="1.60" height="148.50" fill="#e2e2e2"/></svg>
<div class="t" style="right:980.34px;top:268.91px;font-size:17.00px;color:#303134;-webkit-text-stroke:.3px;letter-spacing:0.375px">200 ms</div>
<svg class="r" style="left:1977px;top:259px" width="3" height="149"><rect x="0.68" y="0.30" width="1.60" height="148.50" fill="#e2e2e2"/></svg>
<div class="t" style="right:826.72px;top:268.91px;font-size:17.00px;color:#303134;-webkit-text-stroke:.3px;letter-spacing:0.375px">250 ms</div>
<svg class="r" style="left:2131px;top:259px" width="2" height="149"><rect x="0.30" y="0.30" width="1.60" height="148.50" fill="#e2e2e2"/></svg>
<div class="t" style="right:673.10px;top:268.91px;font-size:17.00px;color:#303134;-webkit-text-stroke:.3px;letter-spacing:0.375px">300 ms</div>
<svg class="r" style="left:2284px;top:259px" width="3" height="149"><rect x="0.92" y="0.30" width="1.60" height="148.50" fill="#e2e2e2"/></svg>
<div class="t" style="right:519.48px;top:268.91px;font-size:17.00px;color:#303134;-webkit-text-stroke:.3px;letter-spacing:0.375px">350 ms</div>
<svg class="r" style="left:2438px;top:259px" width="3" height="149"><rect x="0.54" y="0.30" width="1.60" height="148.50" fill="#e2e2e2"/></svg>
<div class="t" style="right:365.86px;top:268.91px;font-size:17.00px;color:#303134;-webkit-text-stroke:.3px;letter-spacing:0.375px">400 ms</div>
<svg class="r" style="left:2592px;top:259px" width="2" height="149"><rect x="0.16" y="0.30" width="1.60" height="148.50" fill="#e2e2e2"/></svg>
<div class="t" style="right:212.24px;top:268.91px;font-size:17.00px;color:#303134;-webkit-text-stroke:.3px;letter-spacing:0.375px">450 ms</div>
<svg class="r" style="left:2745px;top:259px" width="3" height="149"><rect x="0.78" y="0.30" width="1.60" height="148.50" fill="#e2e2e2"/></svg>
<div class="t" style="right:58.62px;top:268.91px;font-size:17.00px;color:#303134;-webkit-text-stroke:.3px;letter-spacing:0.375px">500 ms</div>
<svg class="r" style="left:1211px;top:259px" width="4" height="34"><rect x="0.30" y="0.50" width="3.30" height="33.00" fill="#9a9a9a"/></svg>
<svg class="r" style="left:2792px;top:259px" width="5" height="34"><rect x="0.50" y="0.50" width="4.00" height="33.00" fill="#9a9a9a"/></svg>
<svg class="r" style="left:2797px;top:259px" width="3" height="151"><rect x="0.00" y="0.30" width="3.00" height="150.00" fill="#cbcdd1"/></svg>
<svg class="r" style="left:1212px;top:311px" width="7" height="6"><rect x="0.50" y="0.80" width="6.50" height="4.60" fill="#8a8a8a"/></svg>
<svg class="r" style="left:1220px;top:311px" width="65" height="6"><rect x="0.80" y="0.80" width="64.20" height="4.60" fill="#4ea654"/></svg>
<svg class="r" style="left:1287px;top:311px" width="7" height="6"><rect x="0.00" y="0.80" width="6.50" height="4.60" fill="#4a9be0"/></svg>
<svg class="r" style="left:1306px;top:311px" width="2" height="6"><rect x="0.00" y="0.80" width="2.00" height="4.60" fill="#bbb"/></svg>
<svg class="r" style="left:1309px;top:311px" width="6" height="6"><rect x="0.00" y="0.80" width="5.50" height="4.60" fill="#8a8a8a"/></svg>
<svg class="r" style="left:1317px;top:311px" width="20" height="6"><rect x="0.00" y="0.80" width="20.00" height="4.60" fill="#4ea654"/></svg>
<svg class="r" style="left:1339px;top:311px" width="179" height="6"><rect x="0.00" y="0.80" width="179.00" height="4.60" fill="#4ea654"/></svg>
<svg class="r" style="left:1520px;top:311px" width="10" height="6"><rect x="0.00" y="0.80" width="10.00" height="4.60" fill="#4a9be0"/></svg>
<svg class="r" style="left:1531px;top:311px" width="44" height="6"><rect x="0.80" y="0.80" width="43.20" height="4.60" fill="#4a9be0"/></svg>
<svg class="r" style="left:1577px;top:311px" width="24" height="6"><rect x="0.00" y="0.80" width="23.80" height="4.60" fill="#4ea654"/></svg>
<svg class="r" style="left:1602px;top:311px" width="9" height="6"><rect x="0.50" y="0.80" width="8.30" height="4.60" fill="#4a9be0"/></svg>
<svg class="r" style="left:1612px;top:311px" width="6" height="6"><rect x="0.50" y="0.80" width="5.00" height="4.60" fill="#4a9be0"/></svg>
<svg class="r" style="left:1619px;top:311px" width="20" height="6"><rect x="0.00" y="0.80" width="20.00" height="4.60" fill="#4ea654"/></svg>
<svg class="r" style="left:1640px;top:311px" width="44" height="6"><rect x="0.80" y="0.80" width="43.00" height="4.60" fill="#4a9be0"/></svg>
<svg class="r" style="left:1685px;top:311px" width="8" height="6"><rect x="0.50" y="0.80" width="7.50" height="4.60" fill="#4a9be0"/></svg>
<svg class="r" style="left:1695px;top:311px" width="33" height="6"><rect x="0.00" y="0.80" width="33.00" height="4.60" fill="#4a9be0"/></svg>
<svg class="r" style="left:1730px;top:311px" width="39" height="6"><rect x="0.00" y="0.80" width="38.80" height="4.60" fill="#4a9be0"/></svg>
<svg class="r" style="left:1773px;top:311px" width="108" height="6"><rect x="0.00" y="0.80" width="107.70" height="4.60" fill="#4ea654"/></svg>
<svg class="r" style="left:1882px;top:311px" width="8" height="6"><rect x="0.00" y="0.80" width="8.00" height="4.60" fill="#4a9be0"/></svg>
<svg class="r" style="left:1891px;top:311px" width="8" height="6"><rect x="0.50" y="0.80" width="7.50" height="4.60" fill="#4a9be0"/></svg>
<svg class="r" style="left:1901px;top:311px" width="482" height="6"><rect x="0.00" y="0.80" width="481.50" height="4.60" fill="#4ea654"/></svg>
<svg class="r" style="left:2382px;top:311px" width="5" height="6"><rect x="0.50" y="0.80" width="4.00" height="4.60" fill="#4a9be0"/></svg>
<svg class="r" style="left:2410px;top:311px" width="4" height="6"><rect x="0.80" y="0.80" width="2.70" height="4.60" fill="#c8c8c8"/></svg>
<svg class="r" style="left:2415px;top:311px" width="142" height="6"><rect x="0.80" y="0.80" width="140.50" height="4.60" fill="#4ea654"/></svg>
<svg class="r" style="left:2556px;top:311px" width="5" height="6"><rect x="0.30" y="0.80" width="4.00" height="4.60" fill="#4a9be0"/></svg>
<svg class="r" style="left:1687px;top:296px" width="2" height="112"><rect x="0.00" y="0.30" width="2.00" height="111.50" fill="#1515a8"/></svg>
<svg class="r" style="left:2391px;top:296px" width="3" height="112"><rect x="0.20" y="0.30" width="2.00" height="111.50" fill="#c5221f"/></svg>
<svg class="r" style="left:1211px;top:407px" width="1589" height="5"><rect x="0.30" y="0.60" width="1588.70" height="3.80" fill="#cbcdd1"/></svg>
<div class="r" style="left:1211.30px;top:411.30px;width:1588.70px;height:48.00px;background:#f1f3f4;"></div>
<svg class="r" style="left:1211px;top:458px" width="1589" height="4"><rect x="0.30" y="0.80" width="1588.70" height="2.40" fill="#cbcdd1"/></svg>
<div class="r" style="left:1211.30px;top:461.20px;width:1588.70px;height:1306.00px;background:#fff;"></div>
<div class="r" style="left:1211.30px;top:461.30px;width:1588.70px;height:38.89px;background:#f5f5f5;"></div>
<div class="r" style="left:1211.30px;top:539.08px;width:1588.70px;height:38.89px;background:#f5f5f5;"></div>
<div class="r" style="left:1211.30px;top:616.86px;width:1588.70px;height:38.89px;background:#f5f5f5;"></div>
<div class="r" style="left:1211.30px;top:694.64px;width:1588.70px;height:38.89px;background:#f5f5f5;"></div>
<div class="r" style="left:1211.30px;top:772.42px;width:1588.70px;height:38.89px;background:#f5f5f5;"></div>
<div class="r" style="left:1211.30px;top:850.20px;width:1588.70px;height:38.89px;background:#f5f5f5;"></div>
<div class="r" style="left:1211.30px;top:927.98px;width:1588.70px;height:38.89px;background:#f5f5f5;"></div>
<div class="r" style="left:1211.30px;top:1005.76px;width:1588.70px;height:38.89px;background:#f5f5f5;"></div>
<div class="r" style="left:1211.30px;top:1083.54px;width:1588.70px;height:38.89px;background:#f5f5f5;"></div>
<div class="r" style="left:1211.30px;top:1161.32px;width:1588.70px;height:38.89px;background:#f5f5f5;"></div>
<div class="r" style="left:1211.30px;top:1239.10px;width:1588.70px;height:38.89px;background:#f5f5f5;"></div>
<svg class="r" style="left:2596px;top:461px" width="2" height="1307"><rect x="0.30" y="0.20" width="1.30" height="1306.00" fill="#dcdcdc"/></svg>
<svg class="r" style="left:2765px;top:461px" width="3" height="1307"><rect x="0.80" y="0.20" width="1.30" height="1306.00" fill="#dcdcdc"/></svg>
<div class="t" style="left:1220.40px;top:425.21px;font-size:22.20px;color:#303942;-webkit-text-stroke:.3px;letter-spacing:-0.047px">Name</div>
<div class="t" style="left:1761.30px;top:425.21px;font-size:22.20px;color:#303942;-webkit-text-stroke:.3px;letter-spacing:0.099px">Status</div>
<div class="t" style="left:1895.80px;top:425.21px;font-size:22.20px;color:#303942;-webkit-text-stroke:.3px;letter-spacing:-0.707px">Type</div>
<div class="t" style="left:2030.30px;top:425.21px;font-size:22.20px;color:#303942;-webkit-text-stroke:.3px;letter-spacing:0.137px">Initiator</div>
<div class="t" style="left:2255.50px;top:425.21px;font-size:22.20px;color:#303942;-webkit-text-stroke:.3px;letter-spacing:-0.418px">Size</div>
<div class="t" style="left:2390.00px;top:425.21px;font-size:22.20px;color:#303942;-webkit-text-stroke:.3px;letter-spacing:-2.375px">T…</div>
<div class="t" style="left:2437.00px;top:425.21px;font-size:22.20px;color:#303942;-webkit-text-stroke:.3px;letter-spacing:-0.205px">Waterfall</div>
<svg class="r" style="left:2765.00px;top:429.00px;" width="15.00" height="12.00" viewBox="0 0 15 12"><path d="M7.500 0L15 12H0Z" fill="#6e7175"/></svg>
<svg class="r" style="left:1227.90px;top:469.90px;" width="18.20" height="22.30" viewBox="0 0 18.2 22.3"><rect x="1" y="1" width="16.200" height="20.3" rx="2" fill="#fff" stroke="#3b78f0" stroke-width="2"/><path d="M3.600 7.400h11M3.600 11.200h11M3.600 15h11" stroke="#3b78f0" stroke-width="1.900"/></svg>
<div class="t" style="left:1259.50px;top:471.01px;font-size:22.20px;color:#303942;-webkit-text-stroke:.3px;letter-spacing:0.318px">optimization/</div>
<div class="t" style="left:1761.30px;top:471.01px;font-size:22.20px;color:#303942;-webkit-text-stroke:.3px;letter-spacing:-0.244px">200</div>
<div class="t" style="left:1895.80px;top:471.01px;font-size:22.20px;color:#303942;-webkit-text-stroke:.3px;letter-spacing:0.293px">document</div>
<div class="t" style="left:2030.30px;top:471.01px;font-size:22.20px;color:#5f6368;-webkit-text-stroke:.3px;letter-spacing:-0.020px">Other</div>
<div class="t" style="right:428.00px;top:471.01px;font-size:22.20px;color:#303942;-webkit-text-stroke:.3px">9.3 kB</div>
<div class="t" style="left:2390.00px;top:471.01px;font-size:22.20px;color:#303942;-webkit-text-stroke:.3px;letter-spacing:-1.016px">2…</div>
<div class="r" style="left:2436.97px;top:474.80px;width:6.05px;height:12.80px;background:#d4d4d4;"></div>
<svg class="r" style="left:2440px;top:474px" width="4" height="14"><rect x="0.53" y="0.80" width="2.50" height="12.80" fill="#9a9a9a"/></svg>
<div class="r" style="left:2443.70px;top:469.00px;width:17.48px;height:24.20px;background:#4ca350;"></div>
<div class="r" style="left:2461.18px;top:469.00px;width:5.71px;height:24.20px;background:#4a9be0;border-left:1px solid #63aeea"></div>
<svg class="r" style="left:1227.90px;top:508.79px;" width="18.20" height="22.30" viewBox="0 0 18.2 22.3"><rect x="1" y="1" width="16.200" height="20.3" rx="2" fill="#fff" stroke="#a44af5" stroke-width="2"/><path d="M14 6.800L8.700 11.400" stroke="#a44af5" stroke-width="3" stroke-linecap="round"/><circle cx="6" cy="13.800" r="2.200" fill="#a44af5"/></svg>
<div class="t" style="left:1259.50px;top:509.90px;font-size:22.20px;color:#303942;-webkit-text-stroke:.3px;letter-spacing:0.065px">main.f765ae08b8293ceeb4b0de56699e2fafc9…</div>
<div class="t" style="left:1761.30px;top:509.90px;font-size:22.20px;color:#303942;-webkit-text-stroke:.3px;letter-spacing:-0.244px">200</div>
<div class="t" style="left:1895.80px;top:509.90px;font-size:22.20px;color:#303942;-webkit-text-stroke:.3px;letter-spacing:-0.011px">stylesheet</div>
<div class="t" style="left:2030.30px;top:509.90px;font-size:22.20px;color:#303942;-webkit-text-stroke:.3px;letter-spacing:-0.433px"><u>(index)</u></div>
<div class="t" style="right:428.00px;top:509.90px;font-size:22.20px;color:#303942;-webkit-text-stroke:.3px">16.0 kB</div>
<div class="t" style="left:2390.00px;top:509.90px;font-size:22.20px;color:#303942;-webkit-text-stroke:.3px;letter-spacing:-1.016px">7…</div>
<div class="r" style="left:2461.18px;top:513.69px;width:6.72px;height:12.80px;background:#d4d4d4;"></div>
<svg class="r" style="left:2465px;top:513px" width="3" height="14"><rect x="0.40" y="0.69" width="2.50" height="12.80" fill="#9a9a9a"/></svg>
<div class="r" style="left:2469.92px;top:507.89px;width:53.78px;height:24.20px;background:#4ca350;"></div>
<div class="r" style="left:2523.70px;top:507.89px;width:4.03px;height:24.20px;background:#4a9be0;border-left:1px solid #63aeea"></div>
<svg class="r" style="left:1227.90px;top:549.48px;" width="18.20" height="18.20" viewBox="0 0 18.2 18.2"><rect width="18.200" height="18.200" fill="#d3d3d6"/><rect x="2" y="2" width="14.200" height="14.200" rx="3.200" fill="#c8401f"/><g stroke="#fff" stroke-width="1.100" fill="none"><path d="M6.100 11a3 3 0 0 1 6 0"/><path d="M9.100 5.600v1.300M5.600 7.200l.8.900M12.600 7.200l-.8.900M3.900 10.700h1M13.300 10.700h1"/><path d="M5.100 12.900h8" stroke-width="1.400"/></g></svg>
<div class="t" style="left:1259.50px;top:548.79px;font-size:22.20px;color:#303942;-webkit-text-stroke:.3px;letter-spacing:0.062px">logo_icon.svg</div>
<div class="t" style="left:1761.30px;top:548.79px;font-size:22.20px;color:#303942;-webkit-text-stroke:.3px;letter-spacing:-0.244px">200</div>
<div class="t" style="left:1895.80px;top:548.79px;font-size:22.20px;color:#303942;-webkit-text-stroke:.3px;letter-spacing:0.143px">svg+xml</div>
<div class="t" style="left:2030.30px;top:548.79px;font-size:22.20px;color:#303942;-webkit-text-stroke:.3px;letter-spacing:-0.433px"><u>(index)</u></div>
<div class="t" style="right:428.00px;top:548.79px;font-size:22.20px;color:#303942;-webkit-text-stroke:.3px">1.2 kB</div>
<div class="t" style="left:2390.00px;top:548.79px;font-size:22.20px;color:#303942;-webkit-text-stroke:.3px;letter-spacing:-1.016px">7…</div>
<div class="r" style="left:2461.18px;top:552.58px;width:7.73px;height:12.80px;background:#d4d4d4;"></div>
<svg class="r" style="left:2466px;top:552px" width="3" height="14"><rect x="0.41" y="0.58" width="2.50" height="12.80" fill="#9a9a9a"/></svg>
<div class="r" style="left:2469.92px;top:546.78px;width:53.78px;height:24.20px;background:#4ca350;"></div>
<div class="r" style="left:2523.70px;top:546.78px;width:4.03px;height:24.20px;background:#4a9be0;border-left:1px solid #63aeea"></div>
<svg class="r" style="left:1227.90px;top:586.57px;" width="18.20" height="22.30" viewBox="0 0 18.2 22.3"><rect x="1" y="1" width="16.200" height="20.3" rx="2" fill="#fff" stroke="#e9a92e" stroke-width="2"/><path d="M7.600 10.400L4.700 13.300L7.600 16.200M10.600 10.400L13.500 13.300L10.600 16.200" fill="none" stroke="#e9a92e" stroke-width="1.900"/></svg>
<div class="t" style="left:1259.50px;top:587.68px;font-size:22.20px;color:#303942;-webkit-text-stroke:.3px;letter-spacing:0.182px">main.bundle.min.min.e0626dbf59b5c25f72bc…</div>
<div class="t" style="left:1761.30px;top:587.68px;font-size:22.20px;color:#303942;-webkit-text-stroke:.3px;letter-spacing:-0.244px">200</div>
<div class="t" style="left:1895.80px;top:587.68px;font-size:22.20px;color:#303942;-webkit-text-stroke:.3px;letter-spacing:0.331px">script</div>
<div class="t" style="left:2030.30px;top:587.68px;font-size:22.20px;color:#303942;-webkit-text-stroke:.3px;letter-spacing:-0.433px"><u>(index)</u></div>
<div class="t" style="right:428.00px;top:587.68px;font-size:22.20px;color:#303942;-webkit-text-stroke:.3px">77.1 kB</div>
<div class="t" style="left:2390.00px;top:587.68px;font-size:22.20px;color:#303942;-webkit-text-stroke:.3px;letter-spacing:-1.016px">6…</div>
<div class="r" style="left:2461.18px;top:591.47px;width:12.77px;height:12.80px;background:#fff;border:1.700px solid #cfcfcf;border-right:2.200px solid #a8a8a8"></div>
<div class="r" style="left:2475.97px;top:585.67px;width:48.40px;height:24.20px;background:#4ca350;"></div>
<div class="r" style="left:2524.37px;top:585.67px;width:5.71px;height:24.20px;background:#4a9be0;border-left:1px solid #63aeea"></div>
<svg class="r" style="left:1227.90px;top:630.96px;" width="18.20" height="9.20" viewBox="0 0 18.2 9.2"><rect width="18.200" height="9.200" fill="#d3d3d6"/><rect x="1.800" y="1.600" width="14.600" height="6" fill="#c3a892"/><rect x="1.800" y="1.600" width="4" height="6" fill="#d9c3a4"/><rect x="12.400" y="1.600" width="4" height="6" fill="#e3c39c"/><circle cx="8.800" cy="4.500" r="2.700" fill="#3a2723"/><rect x="7.600" y="6.200" width="3.400" height="1.400" fill="#d9a184"/></svg>
<div class="t" style="left:1259.50px;top:626.57px;font-size:22.20px;color:#303942;-webkit-text-stroke:.3px;letter-spacing:0.194px">watch_hu25d333fcded103db2f52f7476cb142…</div>
<div class="t" style="left:1761.30px;top:626.57px;font-size:22.20px;color:#303942;-webkit-text-stroke:.3px;letter-spacing:-0.244px">200</div>
<div class="t" style="left:1895.80px;top:626.57px;font-size:22.20px;color:#303942;-webkit-text-stroke:.3px;letter-spacing:0.363px">webp</div>
<div class="t" style="left:2030.30px;top:626.57px;font-size:22.20px;color:#303942;-webkit-text-stroke:.3px;letter-spacing:-0.433px"><u>(index)</u></div>
<div class="t" style="right:428.00px;top:626.57px;font-size:22.20px;color:#303942;-webkit-text-stroke:.3px">24.6 kB</div>
<div class="t" style="left:2390.00px;top:626.57px;font-size:22.20px;color:#303942;-webkit-text-stroke:.3px;letter-spacing:-1.016px">7…</div>
<div class="r" style="left:2461.18px;top:630.36px;width:12.77px;height:12.80px;background:#fff;border:1.700px solid #cfcfcf;border-right:2.200px solid #a8a8a8"></div>
<div class="r" style="left:2475.97px;top:624.56px;width:50.08px;height:24.20px;background:#4ca350;"></div>
<div class="r" style="left:2526.05px;top:624.56px;width:16.81px;height:24.20px;background:#4a9be0;border-left:1px solid #63aeea"></div>
<svg class="r" style="left:1227.90px;top:666.65px;" width="18.20" height="16.40" viewBox="0 0 18.2 16.4"><rect x="1" y="1" width="16.200" height="14.400" fill="#fff" stroke="#cdcdd2" stroke-width="2"/><rect x="6.300" y="4" width="5.600" height="2.200" fill="#7aa2f5"/><rect x="5" y="7.600" width="8.200" height=".7" fill="#b5b5b5"/><rect x="3.700" y="9.800" width="3.600" height="1.700" fill="#5ecb7a"/><rect x="7.300" y="9.800" width="3.600" height="1.700" fill="#f2a83b"/><rect x="10.900" y="9.800" width="3.600" height="1.700" fill="#ee5c50"/><rect x="6.500" y="12.600" width="1.200" height=".8" fill="#666"/><rect x="10.500" y="12.600" width="1.200" height=".8" fill="#666"/></svg>
<div class="t" style="left:1259.50px;top:665.46px;font-size:22.20px;color:#303942;-webkit-text-stroke:.3px;letter-spacing:0.059px">web_dev_lcp.svg</div>
<div class="t" style="left:1761.30px;top:665.46px;font-size:22.20px;color:#303942;-webkit-text-stroke:.3px;letter-spacing:-0.244px">200</div>
<div class="t" style="left:1895.80px;top:665.46px;font-size:22.20px;color:#303942;-webkit-text-stroke:.3px;letter-spacing:0.143px">svg+xml</div>
<div class="t" style="left:2030.30px;top:665.46px;font-size:22.20px;color:#303942;-webkit-text-stroke:.3px;letter-spacing:-0.433px"><u>(index)</u></div>
<div class="t" style="right:428.00px;top:665.46px;font-size:22.20px;color:#303942;-webkit-text-stroke:.3px">7.3 kB</div>
<div class="t" style="left:2390.00px;top:665.46px;font-size:22.20px;color:#303942;-webkit-text-stroke:.3px;letter-spacing:-1.016px">6…</div>
<div class="r" style="left:2461.18px;top:669.25px;width:12.77px;height:12.80px;background:#fff;border:1.700px solid #cfcfcf;border-right:2.200px solid #a8a8a8"></div>
<div class="r" style="left:2475.97px;top:663.45px;width:47.73px;height:24.20px;background:#4ca350;"></div>
<div class="r" style="left:2523.70px;top:663.45px;width:4.03px;height:24.20px;background:#4a9be0;border-left:1px solid #63aeea"></div>
<svg class="r" style="left:1227.90px;top:705.54px;" width="18.20" height="16.40" viewBox="0 0 18.2 16.4"><rect x="1" y="1" width="16.200" height="14.400" fill="#fff" stroke="#cdcdd2" stroke-width="2"/><rect x="6.300" y="4" width="5.600" height="2.200" fill="#7aa2f5"/><rect x="5" y="7.600" width="8.200" height=".7" fill="#b5b5b5"/><rect x="3.700" y="9.800" width="3.600" height="1.700" fill="#5ecb7a"/><rect x="7.300" y="9.800" width="3.600" height="1.700" fill="#f2a83b"/><rect x="10.900" y="9.800" width="3.600" height="1.700" fill="#ee5c50"/><rect x="6.500" y="12.600" width="1.200" height=".8" fill="#666"/><rect x="10.500" y="12.600" width="1.200" height=".8" fill="#666"/></svg>
<div class="t" style="left:1259.50px;top:704.35px;font-size:22.20px;color:#303942;-webkit-text-stroke:.3px;letter-spacing:-0.019px">web_dev_fid.svg</div>
<div class="t" style="left:1761.30px;top:704.35px;font-size:22.20px;color:#303942;-webkit-text-stroke:.3px;letter-spacing:-0.244px">200</div>
<div class="t" style="left:1895.80px;top:704.35px;font-size:22.20px;color:#303942;-webkit-text-stroke:.3px;letter-spacing:0.143px">svg+xml</div>
<div class="t" style="left:2030.30px;top:704.35px;font-size:22.20px;color:#303942;-webkit-text-stroke:.3px;letter-spacing:-0.433px"><u>(index)</u></div>
<div class="t" style="right:428.00px;top:704.35px;font-size:22.20px;color:#303942;-webkit-text-stroke:.3px">6.1 kB</div>
<div class="t" style="left:2390.00px;top:704.35px;font-size:22.20px;color:#303942;-webkit-text-stroke:.3px;letter-spacing:-1.016px">6…</div>
<div class="r" style="left:2461.18px;top:708.14px;width:12.77px;height:12.80px;background:#fff;border:1.700px solid #cfcfcf;border-right:2.200px solid #a8a8a8"></div>
<div class="r" style="left:2475.97px;top:702.34px;width:50.08px;height:24.20px;background:#4ca350;"></div>
<div class="r" style="left:2526.05px;top:702.34px;width:4.03px;height:24.20px;background:#4a9be0;border-left:1px solid #63aeea"></div>
<svg class="r" style="left:1227.90px;top:744.43px;" width="18.20" height="16.40" viewBox="0 0 18.2 16.4"><rect x="1" y="1" width="16.200" height="14.400" fill="#fff" stroke="#cdcdd2" stroke-width="2"/><rect x="6.300" y="4" width="5.600" height="2.200" fill="#7aa2f5"/><rect x="5" y="7.600" width="8.200" height=".7" fill="#b5b5b5"/><rect x="3.700" y="9.800" width="3.600" height="1.700" fill="#5ecb7a"/><rect x="7.300" y="9.800" width="3.600" height="1.700" fill="#f2a83b"/><rect x="10.900" y="9.800" width="3.600" height="1.700" fill="#ee5c50"/><rect x="6.500" y="12.600" width="1.200" height=".8" fill="#666"/><rect x="10.500" y="12.600" width="1.200" height=".8" fill="#666"/></svg>
<div class="t" style="left:1259.50px;top:743.24px;font-size:22.20px;color:#303942;-webkit-text-stroke:.3px;letter-spacing:0.009px">web_dev_cls.svg</div>
<div class="t" style="left:1761.30px;top:743.24px;font-size:22.20px;color:#303942;-webkit-text-stroke:.3px;letter-spacing:-0.244px">200</div>
<div class="t" style="left:1895.80px;top:743.24px;font-size:22.20px;color:#303942;-webkit-text-stroke:.3px;letter-spacing:0.143px">svg+xml</div>
<div class="t" style="left:2030.30px;top:743.24px;font-size:22.20px;color:#303942;-webkit-text-stroke:.3px;letter-spacing:-0.433px"><u>(index)</u></div>
<div class="t" style="right:428.00px;top:743.24px;font-size:22.20px;color:#303942;-webkit-text-stroke:.3px">6.9 kB</div>
<div class="t" style="left:2390.00px;top:743.24px;font-size:22.20px;color:#303942;-webkit-text-stroke:.3px;letter-spacing:-1.016px">2…</div>
<div class="r" style="left:2461.18px;top:747.03px;width:62.52px;height:12.80px;background:#fff;border:1.700px solid #cfcfcf;border-right:2.200px solid #a8a8a8"></div>
<div class="r" style="left:2526.05px;top:741.23px;width:20.17px;height:24.20px;background:#4ca350;"></div>
<div class="r" style="left:2546.22px;top:741.23px;width:3.70px;height:24.20px;background:#4a9be0;border-left:1px solid #63aeea"></div>
<svg class="r" style="left:1227.90px;top:785.12px;" width="18.20" height="13.20" viewBox="0 0 18.2 13.2"><rect x="0" y="0" width="18.200" height="13.200" fill="#cfcfd4"/><rect x="2" y="2.800" width="14.200" height="8.500" fill="#fff"/><rect x="2" y="3.400" width="14.200" height="7.800" fill="#f4e6da"/><rect x="5.500" y="5.800" width="4.500" height="1.200" fill="#d9825e"/><rect x="6.500" y="8" width="2" height="1" fill="#e0a080"/><rect x="0" y="0" width="18.200" height="2.200" fill="#c3c3c8"/></svg>
<div class="t" style="left:1259.50px;top:782.13px;font-size:22.20px;color:#303942;-webkit-text-stroke:.3px;letter-spacing:0.130px">chrome-step01_hud27150869f16affbd9a72df8…</div>
<div class="t" style="left:1761.30px;top:782.13px;font-size:22.20px;color:#303942;-webkit-text-stroke:.3px;letter-spacing:-0.244px">200</div>
<div class="t" style="left:1895.80px;top:782.13px;font-size:22.20px;color:#303942;-webkit-text-stroke:.3px;letter-spacing:0.363px">webp</div>
<div class="t" style="left:2030.30px;top:782.13px;font-size:22.20px;color:#303942;-webkit-text-stroke:.3px;letter-spacing:-0.433px"><u>(index)</u></div>
<div class="t" style="right:428.00px;top:782.13px;font-size:22.20px;color:#303942;-webkit-text-stroke:.3px">33.6 kB</div>
<div class="t" style="left:2390.00px;top:782.13px;font-size:22.20px;color:#303942;-webkit-text-stroke:.3px;letter-spacing:-1.016px">2…</div>
<div class="r" style="left:2461.18px;top:785.92px;width:62.52px;height:12.80px;background:#fff;border:1.700px solid #cfcfcf;border-right:2.200px solid #a8a8a8"></div>
<div class="r" style="left:2526.05px;top:780.12px;width:20.17px;height:24.20px;background:#4ca350;"></div>
<div class="r" style="left:2546.22px;top:780.12px;width:5.71px;height:24.20px;background:#4a9be0;border-left:1px solid #63aeea"></div>
<svg class="r" style="left:1227.90px;top:824.01px;" width="18.20" height="13.20" viewBox="0 0 18.2 13.2"><rect x="0" y="0" width="18.200" height="13.200" fill="#cfcfd4"/><rect x="2" y="2.800" width="14.200" height="8.500" fill="#fff"/><rect x="2" y="3.400" width="6" height="7.800" fill="#f2e3d8"/><rect x="9.500" y="4.500" width="5.500" height="5.500" fill="#e3e7f2"/><rect x="0" y="0" width="18.200" height="2.200" fill="#c3c3c8"/></svg>
<div class="t" style="left:1259.50px;top:821.02px;font-size:22.20px;color:#303942;-webkit-text-stroke:.3px;letter-spacing:0.130px">chrome-step02_hud27150869f16affbd9a72df8…</div>
<div class="t" style="left:1761.30px;top:821.02px;font-size:22.20px;color:#303942;-webkit-text-stroke:.3px;letter-spacing:-0.244px">200</div>
<div class="t" style="left:1895.80px;top:821.02px;font-size:22.20px;color:#303942;-webkit-text-stroke:.3px;letter-spacing:0.363px">webp</div>
<div class="t" style="left:2030.30px;top:821.02px;font-size:22.20px;color:#303942;-webkit-text-stroke:.3px;letter-spacing:-0.433px"><u>(index)</u></div>
<div class="t" style="right:428.00px;top:821.02px;font-size:22.20px;color:#303942;-webkit-text-stroke:.3px">77.9 kB</div>
<div class="t" style="left:2390.00px;top:821.02px;font-size:22.20px;color:#303942;-webkit-text-stroke:.3px;letter-spacing:-1.016px">3…</div>
<div class="r" style="left:2461.18px;top:824.81px;width:62.52px;height:12.80px;background:#fff;border:1.700px solid #cfcfcf;border-right:2.200px solid #a8a8a8"></div>
<div class="r" style="left:2526.05px;top:819.01px;width:21.85px;height:24.20px;background:#4ca350;"></div>
<div class="r" style="left:2547.90px;top:819.01px;width:6.05px;height:24.20px;background:#4a9be0;border-left:1px solid #63aeea"></div>
<svg class="r" style="left:1227.90px;top:862.90px;" width="18.20" height="13.20" viewBox="0 0 18.2 13.2"><rect x="0" y="0" width="18.200" height="13.200" fill="#cfcfd4"/><rect x="2" y="2.800" width="14.200" height="8.500" fill="#fff"/><rect x="2" y="3.400" width="6" height="7.800" fill="#f2e3d8"/><rect x="0" y="0" width="18.200" height="2.200" fill="#c3c3c8"/></svg>
<div class="t" style="left:1259.50px;top:859.91px;font-size:22.20px;color:#303942;-webkit-text-stroke:.3px;letter-spacing:0.130px">chrome-step03_hud27150869f16affbd9a72df8…</div>
<div class="t" style="left:1761.30px;top:859.91px;font-size:22.20px;color:#303942;-webkit-text-stroke:.3px;letter-spacing:-0.244px">200</div>
<div class="t" style="left:1895.80px;top:859.91px;font-size:22.20px;color:#303942;-webkit-text-stroke:.3px;letter-spacing:0.363px">webp</div>
<div class="t" style="left:2030.30px;top:859.91px;font-size:22.20px;color:#303942;-webkit-text-stroke:.3px;letter-spacing:-0.433px"><u>(index)</u></div>
<div class="t" style="right:428.00px;top:859.91px;font-size:22.20px;color:#303942;-webkit-text-stroke:.3px">41.6 kB</div>
<div class="t" style="left:2390.00px;top:859.91px;font-size:22.20px;color:#303942;-webkit-text-stroke:.3px;letter-spacing:-1.016px">2…</div>
<div class="r" style="left:2461.18px;top:863.70px;width:64.87px;height:12.80px;background:#fff;border:1.700px solid #cfcfcf;border-right:2.200px solid #a8a8a8"></div>
<div class="r" style="left:2528.07px;top:857.90px;width:19.83px;height:24.20px;background:#4ca350;"></div>
<div class="r" style="left:2547.90px;top:857.90px;width:6.05px;height:24.20px;background:#4a9be0;border-left:1px solid #63aeea"></div>
<svg class="r" style="left:1227.90px;top:901.79px;" width="18.20" height="13.20" viewBox="0 0 18.2 13.2"><rect x="0" y="0" width="18.200" height="13.200" fill="#cfcfd4"/><rect x="2" y="2.800" width="14.200" height="8.500" fill="#fff"/><rect x="2" y="3.400" width="6" height="7.800" fill="#f2e3d8"/><rect x="0" y="0" width="18.200" height="2.200" fill="#c3c3c8"/></svg>
<div class="t" style="left:1259.50px;top:898.80px;font-size:22.20px;color:#303942;-webkit-text-stroke:.3px;letter-spacing:0.103px">lighthouse-step01_hud27150869f16affbd9a72…</div>
<div class="t" style="left:1761.30px;top:898.80px;font-size:22.20px;color:#303942;-webkit-text-stroke:.3px;letter-spacing:-0.244px">200</div>
<div class="t" style="left:1895.80px;top:898.80px;font-size:22.20px;color:#303942;-webkit-text-stroke:.3px;letter-spacing:0.363px">webp</div>
<div class="t" style="left:2030.30px;top:898.80px;font-size:22.20px;color:#303942;-webkit-text-stroke:.3px;letter-spacing:-0.433px"><u>(index)</u></div>
<div class="t" style="right:428.00px;top:898.80px;font-size:22.20px;color:#303942;-webkit-text-stroke:.3px">42.5 kB</div>
<div class="t" style="left:2390.00px;top:898.80px;font-size:22.20px;color:#303942;-webkit-text-stroke:.3px;letter-spacing:-1.016px">7…</div>
<div class="r" style="left:2461.18px;top:902.59px;width:64.87px;height:12.80px;background:#fff;border:1.700px solid #cfcfcf;border-right:2.200px solid #a8a8a8"></div>
<div class="r" style="left:2528.07px;top:896.79px;width:31.60px;height:24.20px;background:#4ca350;"></div>
<div class="r" style="left:2559.66px;top:896.79px;width:29.24px;height:24.20px;background:#4a9be0;border-left:1px solid #63aeea"></div>
<svg class="r" style="left:1227.90px;top:940.68px;" width="18.20" height="13.20" viewBox="0 0 18.2 13.2"><rect x="0" y="0" width="18.200" height="13.200" fill="#cfcfd4"/><rect x="2" y="2.800" width="14.200" height="8.500" fill="#fff"/><rect x="2" y="3.400" width="6" height="7.800" fill="#f2e3d8"/><rect x="0" y="0" width="18.200" height="2.200" fill="#c3c3c8"/></svg>
<div class="t" style="left:1259.50px;top:937.69px;font-size:22.20px;color:#303942;-webkit-text-stroke:.3px;letter-spacing:0.103px">lighthouse-step02_hud27150869f16affbd9a72…</div>
<div class="t" style="left:1761.30px;top:937.69px;font-size:22.20px;color:#303942;-webkit-text-stroke:.3px;letter-spacing:-0.244px">200</div>
<div class="t" style="left:1895.80px;top:937.69px;font-size:22.20px;color:#303942;-webkit-text-stroke:.3px;letter-spacing:0.363px">webp</div>
<div class="t" style="left:2030.30px;top:937.69px;font-size:22.20px;color:#303942;-webkit-text-stroke:.3px;letter-spacing:-0.433px"><u>(index)</u></div>
<div class="t" style="right:428.00px;top:937.69px;font-size:22.20px;color:#303942;-webkit-text-stroke:.3px">25.0 kB</div>
<div class="t" style="left:2390.00px;top:937.69px;font-size:22.20px;color:#303942;-webkit-text-stroke:.3px;letter-spacing:-1.016px">5…</div>
<div class="r" style="left:2461.18px;top:941.48px;width:75.63px;height:12.80px;background:#fff;border:1.700px solid #cfcfcf;border-right:2.200px solid #a8a8a8"></div>
<div class="r" style="left:2538.82px;top:935.68px;width:17.48px;height:24.20px;background:#4ca350;"></div>
<div class="r" style="left:2556.30px;top:935.68px;width:32.61px;height:24.20px;background:#4a9be0;border-left:1px solid #63aeea"></div>
<svg class="r" style="left:1227.90px;top:979.57px;" width="18.20" height="13.20" viewBox="0 0 18.2 13.2"><rect x="0" y="0" width="18.200" height="13.200" fill="#cfcfd4"/><rect x="2" y="2.800" width="14.200" height="8.500" fill="#fff"/><rect x="2" y="3.400" width="6" height="7.800" fill="#f2e3d8"/><rect x="0" y="0" width="18.200" height="2.200" fill="#c3c3c8"/></svg>
<div class="t" style="left:1259.50px;top:976.58px;font-size:22.20px;color:#303942;-webkit-text-stroke:.3px;letter-spacing:0.103px">lighthouse-step03_hud27150869f16affbd9a72…</div>
<div class="t" style="left:1761.30px;top:976.58px;font-size:22.20px;color:#303942;-webkit-text-stroke:.3px;letter-spacing:-0.244px">200</div>
<div class="t" style="left:1895.80px;top:976.58px;font-size:22.20px;color:#303942;-webkit-text-stroke:.3px;letter-spacing:0.363px">webp</div>
<div class="t" style="left:2030.30px;top:976.58px;font-size:22.20px;color:#303942;-webkit-text-stroke:.3px;letter-spacing:-0.433px"><u>(index)</u></div>
<div class="t" style="right:428.00px;top:976.58px;font-size:22.20px;color:#303942;-webkit-text-stroke:.3px">41.0 kB</div>
<div class="t" style="left:2390.00px;top:976.58px;font-size:22.20px;color:#303942;-webkit-text-stroke:.3px;letter-spacing:-1.016px">4…</div>
<div class="r" style="left:2461.18px;top:980.37px;width:85.04px;height:12.80px;background:#fff;border:1.700px solid #cfcfcf;border-right:2.200px solid #a8a8a8"></div>
<div class="r" style="left:2547.90px;top:974.57px;width:20.17px;height:24.20px;background:#4ca350;"></div>
<div class="r" style="left:2568.07px;top:974.57px;width:20.84px;height:24.20px;background:#4a9be0;border-left:1px solid #63aeea"></div>
<svg class="r" style="left:1227.90px;top:1018.46px;" width="18.20" height="13.20" viewBox="0 0 18.2 13.2"><rect x="0" y="0" width="18.200" height="13.200" fill="#cfcfd4"/><rect x="2" y="2.800" width="14.200" height="8.500" fill="#fff"/><rect x="2" y="3.400" width="6" height="7.800" fill="#f2e3d8"/><rect x="0" y="0" width="18.200" height="2.200" fill="#c3c3c8"/></svg>
<div class="t" style="left:1259.50px;top:1015.47px;font-size:22.20px;color:#303942;-webkit-text-stroke:.3px;letter-spacing:0.103px">lighthouse-step04_hud27150869f16affbd9a72…</div>
<div class="t" style="left:1761.30px;top:1015.47px;font-size:22.20px;color:#303942;-webkit-text-stroke:.3px;letter-spacing:-0.244px">200</div>
<div class="t" style="left:1895.80px;top:1015.47px;font-size:22.20px;color:#303942;-webkit-text-stroke:.3px;letter-spacing:0.363px">webp</div>
<div class="t" style="left:2030.30px;top:1015.47px;font-size:22.20px;color:#303942;-webkit-text-stroke:.3px;letter-spacing:-0.433px"><u>(index)</u></div>
<div class="t" style="right:428.00px;top:1015.47px;font-size:22.20px;color:#303942;-webkit-text-stroke:.3px">37.8 kB</div>
<div class="t" style="left:2390.00px;top:1015.47px;font-size:22.20px;color:#303942;-webkit-text-stroke:.3px;letter-spacing:-1.016px">5…</div>
<div class="r" style="left:2461.18px;top:1019.26px;width:86.72px;height:12.80px;background:#fff;border:1.700px solid #cfcfcf;border-right:2.200px solid #a8a8a8"></div>
<div class="r" style="left:2549.92px;top:1013.46px;width:18.15px;height:24.20px;background:#4ca350;"></div>
<div class="r" style="left:2568.07px;top:1013.46px;width:24.87px;height:24.20px;background:#4a9be0;border-left:1px solid #63aeea"></div>
<svg class="r" style="left:1227.90px;top:1055.45px;" width="18.20" height="17.60" viewBox="0 0 18.2 17.6"><rect x="1" y="1" width="16.200" height="15.600" fill="#fff" stroke="#cdcdd2" stroke-width="2"/></svg>
<div class="t" style="left:1259.50px;top:1054.36px;font-size:22.20px;color:#303942;-webkit-text-stroke:.3px;letter-spacing:0.289px">carousel-control-prev-icon-bg.svg</div>
<div class="t" style="left:1761.30px;top:1054.36px;font-size:22.20px;color:#303942;-webkit-text-stroke:.3px;letter-spacing:-0.244px">200</div>
<div class="t" style="left:1895.80px;top:1054.36px;font-size:22.20px;color:#303942;-webkit-text-stroke:.3px;letter-spacing:0.143px">svg+xml</div>
<div class="t" style="left:2030.30px;top:1054.36px;font-size:22.20px;color:#303942;-webkit-text-stroke:.3px;letter-spacing:0.030px"><u>main.f765ae0….css</u></div>
<div class="t" style="right:428.00px;top:1054.36px;font-size:22.20px;color:#303942;-webkit-text-stroke:.3px">493 B</div>
<div class="t" style="left:2390.00px;top:1054.36px;font-size:22.20px;color:#303942;-webkit-text-stroke:.3px;letter-spacing:-1.016px">4…</div>
<div class="r" style="left:2524.37px;top:1058.15px;width:23.53px;height:12.80px;background:#fff;border:1.700px solid #cfcfcf;border-right:2.200px solid #a8a8a8"></div>
<div class="r" style="left:2549.92px;top:1052.35px;width:20.50px;height:24.20px;background:#4ca350;"></div>
<div class="r" style="left:2570.42px;top:1052.35px;width:23.53px;height:24.20px;background:#4a9be0;border-left:1px solid #63aeea"></div>
<svg class="r" style="left:1227.90px;top:1094.34px;" width="18.20" height="17.60" viewBox="0 0 18.2 17.6"><rect x="1" y="1" width="16.200" height="15.600" fill="#fff" stroke="#cdcdd2" stroke-width="2"/></svg>
<div class="t" style="left:1259.50px;top:1093.25px;font-size:22.20px;color:#303942;-webkit-text-stroke:.3px;letter-spacing:0.305px">carousel-control-next-icon-bg.svg</div>
<div class="t" style="left:1761.30px;top:1093.25px;font-size:22.20px;color:#303942;-webkit-text-stroke:.3px;letter-spacing:-0.244px">200</div>
<div class="t" style="left:1895.80px;top:1093.25px;font-size:22.20px;color:#303942;-webkit-text-stroke:.3px;letter-spacing:0.143px">svg+xml</div>
<div class="t" style="left:2030.30px;top:1093.25px;font-size:22.20px;color:#303942;-webkit-text-stroke:.3px;letter-spacing:0.030px"><u>main.f765ae0….css</u></div>
<div class="t" style="right:428.00px;top:1093.25px;font-size:22.20px;color:#303942;-webkit-text-stroke:.3px">375 B</div>
<div class="t" style="left:2390.00px;top:1093.25px;font-size:22.20px;color:#303942;-webkit-text-stroke:.3px;letter-spacing:-1.016px">4…</div>
<div class="r" style="left:2524.37px;top:1097.04px;width:23.53px;height:12.80px;background:#fff;border:1.700px solid #cfcfcf;border-right:2.200px solid #a8a8a8"></div>
<div class="r" style="left:2549.92px;top:1091.24px;width:29.92px;height:24.20px;background:#4ca350;"></div>
<div class="r" style="left:2579.83px;top:1091.24px;width:14.12px;height:24.20px;background:#4a9be0;border-left:1px solid #63aeea"></div>
<svg class="r" style="left:1227.90px;top:1131.23px;" width="18.20" height="21.50" viewBox="0 0 18.2 21.5"><rect x="1" y="1" width="16.200" height="19.5" rx="2" fill="#fff" stroke="#45b3e0" stroke-width="2"/><path d="M4.700 7.500h8.500M9 7.500v8.200" fill="none" stroke="#45b3e0" stroke-width="2.200"/></svg>
<div class="t" style="left:1259.50px;top:1132.14px;font-size:22.20px;color:#303942;-webkit-text-stroke:.3px;letter-spacing:0.171px">inter-v12-latin-300.woff2</div>
<div class="t" style="left:1761.30px;top:1132.14px;font-size:22.20px;color:#303942;-webkit-text-stroke:.3px;letter-spacing:-0.244px">200</div>
<div class="t" style="left:1895.80px;top:1132.14px;font-size:22.20px;color:#303942;-webkit-text-stroke:.3px;letter-spacing:0.246px">font</div>
<div class="t" style="left:2030.30px;top:1132.14px;font-size:22.20px;color:#303942;-webkit-text-stroke:.3px;letter-spacing:0.030px"><u>main.f765ae0….css</u></div>
<div class="t" style="right:428.00px;top:1132.14px;font-size:22.20px;color:#303942;-webkit-text-stroke:.3px">17.4 kB</div>
<div class="t" style="left:2390.00px;top:1132.14px;font-size:22.20px;color:#303942;-webkit-text-stroke:.3px;letter-spacing:-1.016px">2…</div>
<div class="r" style="left:2526.05px;top:1135.93px;width:62.86px;height:12.80px;background:#fff;border:1.700px solid #cfcfcf"></div>
<div class="r" style="left:2582.91px;top:1135.93px;width:6.00px;height:12.80px;background:#8a8a8a;"></div>
<div class="r" style="left:2590.92px;top:1130.13px;width:162.02px;height:24.20px;background:#4ca350;"></div>
<div class="r" style="left:2752.94px;top:1130.13px;width:6.05px;height:24.20px;background:#4a9be0;border-left:1px solid #63aeea"></div>
<svg class="r" style="left:1227.90px;top:1170.12px;" width="18.20" height="21.50" viewBox="0 0 18.2 21.5"><rect x="1" y="1" width="16.200" height="19.5" rx="2" fill="#fff" stroke="#45b3e0" stroke-width="2"/><path d="M4.700 7.500h8.500M9 7.500v8.200" fill="none" stroke="#45b3e0" stroke-width="2.200"/></svg>
<div class="t" style="left:1259.50px;top:1171.03px;font-size:22.20px;color:#303942;-webkit-text-stroke:.3px;letter-spacing:0.259px">fa-solid-900.woff2</div>
<div class="t" style="left:1761.30px;top:1171.03px;font-size:22.20px;color:#303942;-webkit-text-stroke:.3px;letter-spacing:-0.244px">200</div>
<div class="t" style="left:1895.80px;top:1171.03px;font-size:22.20px;color:#303942;-webkit-text-stroke:.3px;letter-spacing:0.246px">font</div>
<div class="t" style="left:2030.30px;top:1171.03px;font-size:22.20px;color:#303942;-webkit-text-stroke:.3px;letter-spacing:0.030px"><u>main.f765ae0….css</u></div>
<div class="t" style="right:428.00px;top:1171.03px;font-size:22.20px;color:#303942;-webkit-text-stroke:.3px">154 kB</div>
<div class="t" style="left:2390.00px;top:1171.03px;font-size:22.20px;color:#303942;-webkit-text-stroke:.3px;letter-spacing:-1.016px">4…</div>
<div class="r" style="left:2526.05px;top:1174.82px;width:62.86px;height:12.80px;background:#fff;border:1.700px solid #cfcfcf"></div>
<div class="r" style="left:2582.91px;top:1174.82px;width:6.00px;height:12.80px;background:#8a8a8a;"></div>
<div class="r" style="left:2590.92px;top:1169.02px;width:29.24px;height:24.20px;background:#4ca350;"></div>
<div class="r" style="left:2620.17px;top:1169.02px;width:7.73px;height:24.20px;background:#4a9be0;border-left:1px solid #63aeea"></div>
<svg class="r" style="left:1227.90px;top:1209.01px;" width="18.20" height="21.50" viewBox="0 0 18.2 21.5"><rect x="1" y="1" width="16.200" height="19.5" rx="2" fill="#fff" stroke="#45b3e0" stroke-width="2"/><path d="M4.700 7.500h8.500M9 7.500v8.200" fill="none" stroke="#45b3e0" stroke-width="2.200"/></svg>
<div class="t" style="left:1259.50px;top:1209.92px;font-size:22.20px;color:#303942;-webkit-text-stroke:.3px;letter-spacing:0.171px">inter-v12-latin-600.woff2</div>
<div class="t" style="left:1761.30px;top:1209.92px;font-size:22.20px;color:#303942;-webkit-text-stroke:.3px;letter-spacing:-0.244px">200</div>
<div class="t" style="left:1895.80px;top:1209.92px;font-size:22.20px;color:#303942;-webkit-text-stroke:.3px;letter-spacing:0.246px">font</div>
<div class="t" style="left:2030.30px;top:1209.92px;font-size:22.20px;color:#303942;-webkit-text-stroke:.3px;letter-spacing:0.030px"><u>main.f765ae0….css</u></div>
<div class="t" style="right:428.00px;top:1209.92px;font-size:22.20px;color:#303942;-webkit-text-stroke:.3px">17.8 kB</div>
<div class="t" style="left:2390.00px;top:1209.92px;font-size:22.20px;color:#303942;-webkit-text-stroke:.3px;letter-spacing:-1.016px">4…</div>
<div class="r" style="left:2526.05px;top:1213.71px;width:62.86px;height:12.80px;background:#fff;border:1.700px solid #cfcfcf"></div>
<div class="r" style="left:2582.91px;top:1213.71px;width:6.00px;height:12.80px;background:#8a8a8a;"></div>
<div class="r" style="left:2590.92px;top:1207.91px;width:33.28px;height:24.20px;background:#4ca350;"></div>
<div class="r" style="left:2624.20px;top:1207.91px;width:3.70px;height:24.20px;background:#4a9be0;border-left:1px solid #63aeea"></div>
<svg class="r" style="left:1227.90px;top:1247.90px;" width="18.20" height="21.50" viewBox="0 0 18.2 21.5"><rect x="1" y="1" width="16.200" height="19.5" rx="2" fill="#fff" stroke="#45b3e0" stroke-width="2"/><path d="M4.700 7.500h8.500M9 7.500v8.200" fill="none" stroke="#45b3e0" stroke-width="2.200"/></svg>
<div class="t" style="left:1259.50px;top:1248.81px;font-size:22.20px;color:#303942;-webkit-text-stroke:.3px;letter-spacing:0.063px">inter-v12-latin-regular.woff2</div>
<div class="t" style="left:1761.30px;top:1248.81px;font-size:22.20px;color:#303942;-webkit-text-stroke:.3px;letter-spacing:-0.244px">200</div>
<div class="t" style="left:1895.80px;top:1248.81px;font-size:22.20px;color:#303942;-webkit-text-stroke:.3px;letter-spacing:0.246px">font</div>
<div class="t" style="left:2030.30px;top:1248.81px;font-size:22.20px;color:#303942;-webkit-text-stroke:.3px;letter-spacing:0.030px"><u>main.f765ae0….css</u></div>
<div class="t" style="right:428.00px;top:1248.81px;font-size:22.20px;color:#303942;-webkit-text-stroke:.3px">16.8 kB</div>
<div class="t" style="left:2390.00px;top:1248.81px;font-size:22.20px;color:#303942;-webkit-text-stroke:.3px;letter-spacing:-1.016px">4…</div>
<div class="r" style="left:2526.05px;top:1252.60px;width:62.86px;height:12.80px;background:#fff;border:1.700px solid #cfcfcf"></div>
<div class="r" style="left:2582.91px;top:1252.60px;width:6.00px;height:12.80px;background:#8a8a8a;"></div>
<div class="r" style="left:2590.92px;top:1246.80px;width:33.28px;height:24.20px;background:#4ca350;"></div>
<div class="r" style="left:2624.20px;top:1246.80px;width:3.70px;height:24.20px;background:#4a9be0;border-left:1px solid #63aeea"></div>
<svg class="r" style="left:1227.90px;top:1286.79px;" width="18.20" height="21.80" viewBox="0 0 18.2 21.8"><rect x="1" y="1" width="16.200" height="19.8" rx="2" fill="#fff" stroke="#6d7278" stroke-width="2"/></svg>
<div class="t" style="left:1259.50px;top:1287.70px;font-size:22.20px;color:#303942;-webkit-text-stroke:.3px;letter-spacing:0.117px">favicon_hu546703baadbac0de87b2f81dc4001…</div>
<div class="t" style="left:1761.30px;top:1287.70px;font-size:22.20px;color:#303942;-webkit-text-stroke:.3px;letter-spacing:-0.244px">200</div>
<div class="t" style="left:1895.80px;top:1287.70px;font-size:22.20px;color:#303942;-webkit-text-stroke:.3px;letter-spacing:-0.010px">png</div>
<div class="t" style="left:2030.30px;top:1287.70px;font-size:22.20px;color:#5f6368;-webkit-text-stroke:.3px;letter-spacing:-0.020px">Other</div>
<div class="t" style="right:428.00px;top:1287.70px;font-size:22.20px;color:#303942;-webkit-text-stroke:.3px">1.1 kB</div>
<div class="t" style="left:2390.00px;top:1287.70px;font-size:22.20px;color:#303942;-webkit-text-stroke:.3px;letter-spacing:-1.016px">4…</div>
<div class="r" style="left:2755.63px;top:1291.49px;width:5.38px;height:12.80px;background:#d4d4d4;"></div>
<svg class="r" style="left:2758px;top:1291px" width="4" height="14"><rect x="0.51" y="0.49" width="2.50" height="12.80" fill="#9a9a9a"/></svg>
<div class="r" style="left:2763.03px;top:1285.69px;width:33.97px;height:24.20px;background:#4ca350;"></div>
<svg class="r" style="left:1752px;top:411px" width="2" height="1357"><rect x="0.20" y="0.30" width="1.70" height="1356.00" fill="#cbcdd1"/></svg>
<svg class="r" style="left:1887px;top:411px" width="2" height="1357"><rect x="0.20" y="0.30" width="1.70" height="1356.00" fill="#cbcdd1"/></svg>
<svg class="r" style="left:2021px;top:411px" width="2" height="1357"><rect x="0.00" y="0.30" width="1.70" height="1356.00" fill="#cbcdd1"/></svg>
<svg class="r" style="left:2246px;top:411px" width="2" height="1357"><rect x="0.20" y="0.30" width="1.70" height="1356.00" fill="#cbcdd1"/></svg>
<svg class="r" style="left:2380px;top:411px" width="3" height="1357"><rect x="0.70" y="0.30" width="1.70" height="1356.00" fill="#cbcdd1"/></svg>
<svg class="r" style="left:2427px;top:411px" width="5" height="1357"><rect x="0.70" y="0.30" width="3.40" height="1356.00" fill="#cbcdd1"/></svg>
<svg class="r" style="left:2564px;top:461px" width="2" height="1307"><rect x="0.20" y="0.20" width="1.80" height="1306.00" fill="#2b5fd0"/></svg>
<svg class="r" style="left:2751px;top:461px" width="3" height="1307"><rect x="0.20" y="0.20" width="2.30" height="1306.00" fill="#b1271f"/></svg>
<svg class="r" style="left:2797px;top:411px" width="3" height="1409"><rect x="0.00" y="0.30" width="3.00" height="1408.00" fill="#cbcdd1"/></svg>
<div class="r" style="left:1211.30px;top:1767.00px;width:1588.70px;height:52.00px;background:#f1f3f4;"></div>
<svg class="r" style="left:1211px;top:1767px" width="1589" height="3"><rect x="0.30" y="0.00" width="1588.70" height="2.20" fill="#cbcdd1"/></svg>
<svg class="r" style="left:1211px;top:1816px" width="1589" height="3"><rect x="0.30" y="0.50" width="1588.70" height="2.50" fill="#cbcdd1"/></svg>
<div class="t" style="left:1230.30px;top:1782.71px;font-size:22.20px;color:#5f6368;-webkit-text-stroke:.3px;letter-spacing:0.032px">22 requests</div>
<div class="t" style="left:1382.90px;top:1782.71px;font-size:22.20px;color:#5f6368;-webkit-text-stroke:.3px;letter-spacing:0.054px">656 kB transferred</div>
<div class="t" style="left:1603.40px;top:1782.71px;font-size:22.20px;color:#5f6368;-webkit-text-stroke:.3px;letter-spacing:-0.030px">1.1 MB resources</div>
<div class="t" style="left:1813.00px;top:1782.71px;font-size:22.20px;color:#5f6368;-webkit-text-stroke:.3px;letter-spacing:-0.070px">Finish: 438 ms</div>
<div class="t" style="left:1992.00px;top:1782.71px;font-size:22.20px;color:#1a1aa6;-webkit-text-stroke:.3px;letter-spacing:0.129px">DOMContentLoaded: 154 ms</div>
<div class="t" style="left:2319.30px;top:1782.71px;font-size:22.20px;color:#c5221f;-webkit-text-stroke:.3px;letter-spacing:0.112px">Load: 383 ms</div>
<svg class="r" style="left:1365px;top:1778px" width="2" height="30"><rect x="0.10" y="0.20" width="1.80" height="29.30" fill="#cbcdd1"/></svg>
<svg class="r" style="left:1584px;top:1778px" width="3" height="30"><rect x="0.30" y="0.20" width="1.80" height="29.30" fill="#cbcdd1"/></svg>
<svg class="r" style="left:1794px;top:1778px" width="2" height="30"><rect x="0.10" y="0.20" width="1.80" height="29.30" fill="#cbcdd1"/></svg>
<svg class="r" style="left:1973px;top:1778px" width="3" height="30"><rect x="0.60" y="0.20" width="1.80" height="29.30" fill="#cbcdd1"/></svg>
<svg class="r" style="left:2301px;top:1778px" width="3" height="30"><rect x="0.60" y="0.20" width="1.80" height="29.30" fill="#cbcdd1"/></svg>
<svg class="r" style="left:1209px;top:407px" width="5" height="1413"><rect x="0.50" y="0.60" width="4.00" height="1412.00" fill="#c9cbd0"/></svg>
</div>
</body></html>
